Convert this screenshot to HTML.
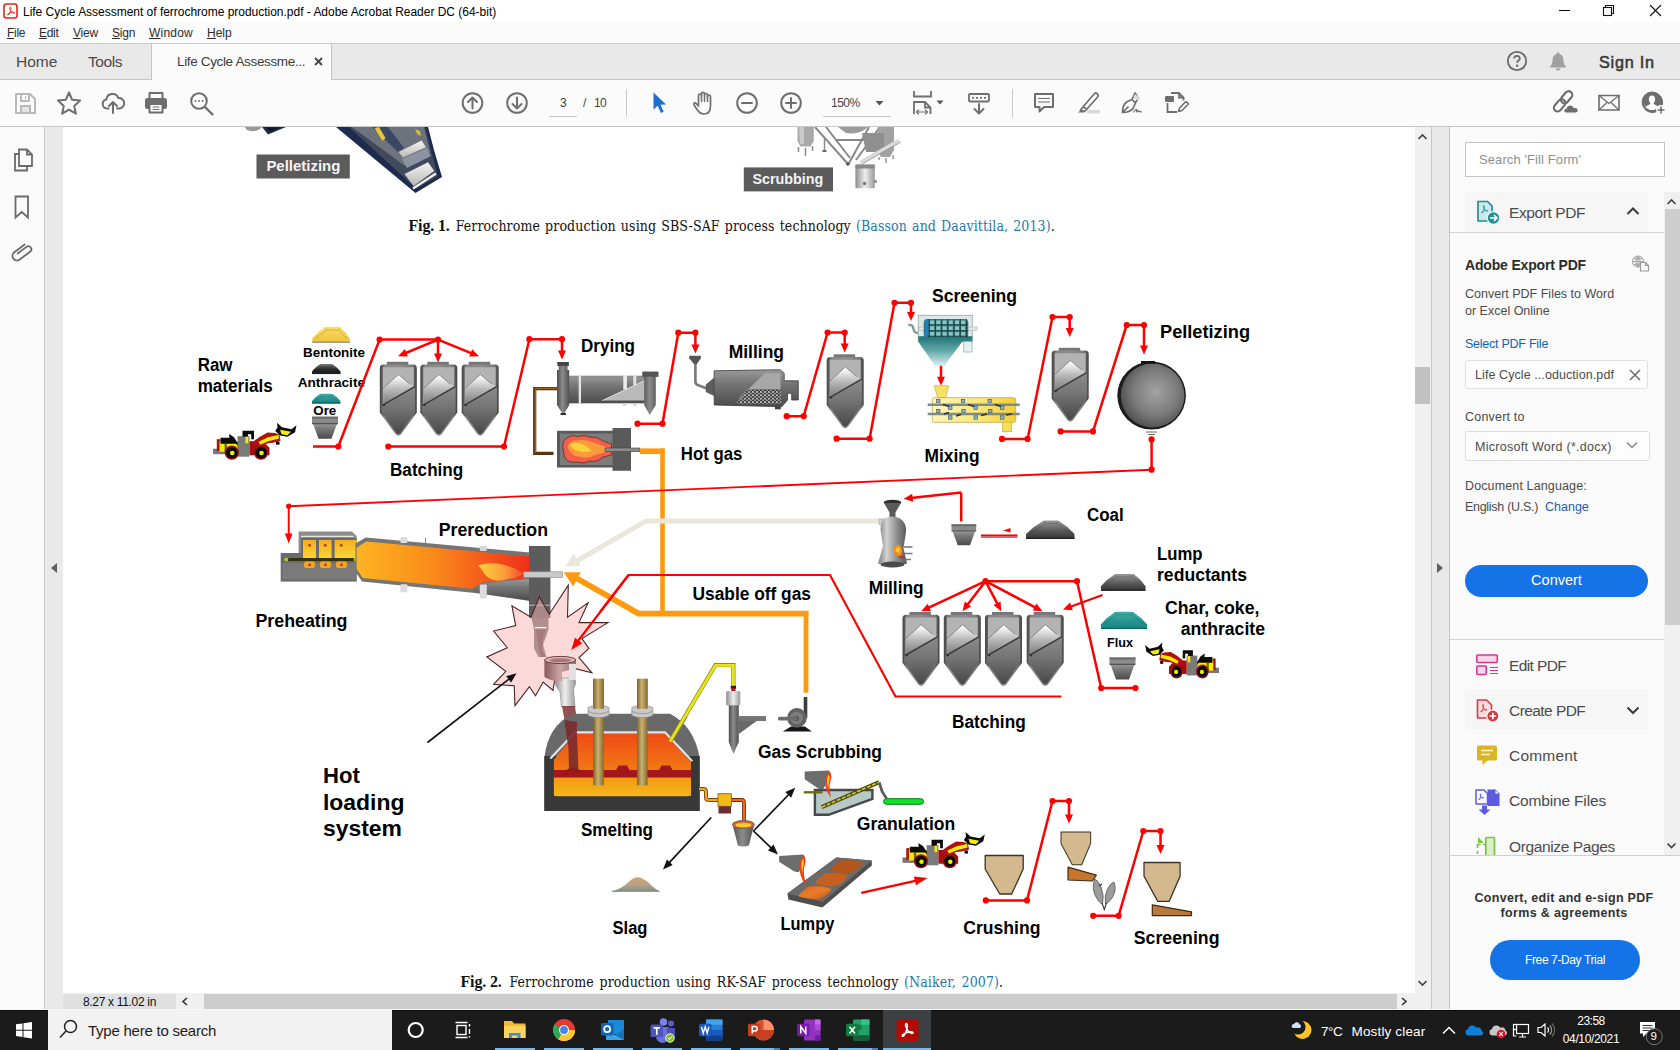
<!DOCTYPE html>
<html lang="en">
<head>
<meta charset="utf-8">
<title>Life Cycle Assessment of ferrochrome production.pdf - Adobe Acrobat Reader DC (64-bit)</title>
<style>
*{box-sizing:border-box;margin:0;padding:0}
html,body{width:1680px;height:1050px;overflow:hidden;background:#fff}
body{position:relative;font-family:"Liberation Sans",sans-serif;color:#000}
.abs{position:absolute}
.t{position:absolute;white-space:nowrap;line-height:1}
/* window chrome */
#titlebar{left:0;top:0;width:1680px;height:22px;background:#fff}
#menubar{left:0;top:22px;width:1680px;height:21px;background:#fbfbfb}
#tabbar{left:0;top:43px;width:1680px;height:37px;background:#e9e9e9;border-top:1px solid #c9c9c9;border-bottom:1px solid #c4c4c4}
#tabactive{left:151px;top:44px;width:181px;height:36px;background:#fbfbfb;border-left:1px solid #c4c4c4;border-right:1px solid #c4c4c4}
#toolbar{left:0;top:80px;width:1680px;height:47px;background:#fbfbfb;border-bottom:1px solid #c6c6c6}
/* panes */
#leftpane{left:0;top:127px;width:45px;height:883px;background:#fafafa;border-right:1px solid #c6c6c6}
#leftsplit{left:45px;top:127px;width:18px;height:883px;background:#e9e9e9}
#page{left:63px;top:127px;width:1352px;height:866px;background:#fff}
#vscroll{left:1415px;top:127px;width:16px;height:866px;background:#f0f0f0}
#rightsplit{left:1431px;top:127px;width:19px;height:883px;background:#e9e9e9;border-left:1px solid #c6c6c6;border-right:1px solid #c6c6c6}
#rightpane{left:1450px;top:127px;width:230px;height:883px;background:#fafafa}
#hscroll{left:63px;top:993px;width:1368px;height:17px;background:#f0f0f0}
#taskbar{left:0;top:1010px;width:1680px;height:40px;background:#1b1b1b;border-top:1px solid #0c0c0c}
</style>
</head>
<body>
<div class="abs" id="titlebar"></div>
<div class="abs" id="menubar"></div>
<div class="abs" id="tabbar"></div>
<div class="abs" id="tabactive"></div>
<div class="abs" id="toolbar"></div>
<div class="abs" id="leftpane"></div>
<div class="abs" id="leftsplit"></div>
<div class="abs" id="page"></div>
<div class="abs" id="vscroll"></div>
<div class="abs" id="rightsplit"></div>
<div class="abs" id="rightpane"></div>
<div class="abs" id="hscroll"></div>
<div class="abs" id="taskbar"></div>
<!--CHROME-->
<!-- ===== title bar ===== -->
<svg class="abs" style="left:3px;top:3px" width="15" height="16" viewBox="0 0 15 16"><rect x="1" y="1" width="13" height="14" rx="2.5" fill="#fff" stroke="#e1251b" stroke-width="1.6"/><path d="M7.4 4.2c-.9 0-.9 1.6.1 3.200 1 1.700 2.600 3 3.600 2.800.9-.2.300-1.200-.9-1.100-1.800.1-4.300 1-5.300 2-.8.800-.1 1.400.6.700 1-1 2-3.600 2.300-5.400.200-1.300.1-2.200-.4-2.200z" fill="none" stroke="#e1251b" stroke-width="1"/></svg>
<div class="t" style="left:23px;top:6px;font-size:12px;letter-spacing:-.02px;color:#000">Life Cycle Assessment of ferrochrome production.pdf - Adobe Acrobat Reader DC (64-bit)</div>
<svg class="abs" style="left:1550px;top:0" width="130" height="22" viewBox="0 0 130 22"><g stroke="#111" stroke-width="1.1" fill="none"><path d="M9 10.500h11"/><rect x="53.500" y="7.500" width="8" height="8"/><path d="M55.500 7.500v-2h8v8h-2"/><path d="M100 5l11 11M111 5l-11 11"/></g></svg>
<!-- ===== menu bar ===== -->
<div class="t" style="left:7px;top:27px;font-size:12px;color:#2b2b2b;letter-spacing:-.3px"><u>F</u>ile</div>
<div class="t" style="left:39px;top:27px;font-size:12px;color:#2b2b2b;letter-spacing:-.3px"><u>E</u>dit</div>
<div class="t" style="left:73px;top:27px;font-size:12px;color:#2b2b2b;letter-spacing:-.2px"><u>V</u>iew</div>
<div class="t" style="left:112px;top:27px;font-size:12px;color:#2b2b2b;letter-spacing:-.2px"><u>S</u>ign</div>
<div class="t" style="left:149px;top:27px;font-size:12px;color:#2b2b2b;letter-spacing:.2px"><u>W</u>indow</div>
<div class="t" style="left:207px;top:27px;font-size:12px;color:#2b2b2b;letter-spacing:0"><u>H</u>elp</div>
<!-- ===== tab bar ===== -->
<div class="t" style="left:16px;top:54px;font-size:15.5px;color:#4a4a4a">Home</div>
<div class="t" style="left:88px;top:54px;font-size:15.5px;color:#4a4a4a;letter-spacing:-.4px">Tools</div>
<div class="t" style="left:177px;top:55px;font-size:13.5px;color:#3c3c3c;letter-spacing:-.35px">Life Cycle Assessme...</div>
<svg class="abs" style="left:313px;top:56px" width="11" height="11" viewBox="0 0 11 11"><path d="M2 2l7 7M9 2l-7 7" stroke="#444" stroke-width="1.800" fill="none"/></svg>
<svg class="abs" style="left:1504px;top:48px" width="70" height="28" viewBox="0 0 70 28"><circle cx="13" cy="13" r="9.200" fill="none" stroke="#6a6a6a" stroke-width="1.800"/><path d="M10.200 10.600c0-3.600 5.600-3.600 5.600-.2 0 2.100-2.700 2.200-2.700 4.400" fill="none" stroke="#6a6a6a" stroke-width="1.800"/><circle cx="13.100" cy="17.800" r="1.200" fill="#6a6a6a"/><path d="M54 4.500c-1 0-1.500.7-1.500 1.500-3 1-4 3.500-4 6.500 0 3.500-1 4.500-2.500 6v1h16v-1c-1.500-1.500-2.500-2.500-2.500-6 0-3-1-5.500-4-6.500 0-.8-.5-1.500-1.500-1.500zM51.500 20.500c.3 1.300 1.200 2 2.500 2s2.200-.7 2.500-2z" fill="#a0a0a0"/></svg>
<div class="t" style="left:1599px;top:54px;font-size:16.2px;font-weight:400;-webkit-text-stroke:.55px #3a3a3a;color:#3a3a3a;letter-spacing:.75px">Sign In</div>
<!-- ===== toolbar icons ===== -->
<svg class="abs" style="left:0;top:80px" width="1680" height="46" viewBox="0 80 1680 46">
<g fill="none" stroke="#6e6e6e" stroke-width="2" stroke-linejoin="round" stroke-linecap="round">
<!-- save (disabled) -->
<g stroke="#b9b9b9"><path d="M16 94h14l5 5v14H16z"/><path d="M21 94v7h8v-7M21 113v-7h9v7" /><path d="M25.500 96.500v2.500" stroke-width="1"/><rect x="22" y="107" width="7" height="5" fill="#e4e4e4" stroke="none"/></g>
<!-- star -->
<path d="M69 92.500l3.200 7.300 7.900.800-5.900 5.300 1.700 7.800-6.900-4-6.900 4 1.700-7.800-5.900-5.300 7.900-.800z"/>
<!-- cloud upload -->
<path d="M108.500 108.500h-1.500a4.600 4.600 0 0 1-.6-9.100 6.200 6.200 0 0 1 12-1.300 5.200 5.200 0 0 1 1.100 10.400h-2.500M113 113v-10.500M109 106l4-4 4 4"/>
<!-- printer -->
<path d="M149.500 99v-6h13v6"/><rect x="146" y="99" width="20" height="9" rx="1.500" fill="#6e6e6e"/><rect x="149.500" y="104" width="13" height="8.500" fill="#fbfbfb"/><path d="M153 107h6M153 109.500h6" stroke-width="1"/>
<!-- find -->
<circle cx="199" cy="101" r="7.800"/><path d="M205 107l7.500 7.500" stroke-width="2.400"/><path d="M195.500 101h.1M199 101h.1M202.500 101h.1" stroke-width="1.800"/>
<!-- page up/down -->
<circle cx="472.500" cy="103" r="9.800"/><path d="M472.500 108.500v-10.500M468 102l4.500-4.500 4.500 4.500"/>
<circle cx="517" cy="103" r="9.800"/><path d="M517 97.500v10.500M512.500 104l4.500 4.500 4.500-4.500"/>
<!-- hand -->
<path d="M698.500 104v-8.500a1.500 1.500 0 0 1 3 0v-1.700a1.500 1.500 0 0 1 3 0v1.200a1.500 1.500 0 0 1 3 0v1.500a1.500 1.500 0 0 1 3 0v9.500c0 5-2.500 8-6.500 8-3.500 0-5-1.500-7-4.500l-3-4.800c-.8-1.500 1-2.500 2.200-1.200l2.300 2.500z" stroke-width="1.700"/><path d="M701.500 95.500v6M704.500 95v6.500M707.500 96.500v5" stroke-width="1.500"/>
<!-- zoom out / in -->
<circle cx="747" cy="103" r="9.800"/><path d="M742 103h10"/>
<circle cx="791" cy="103" r="9.800"/><path d="M786 103h10M791 98v10"/>
<!-- fit width -->
<path d="M914 91v5.500h17v-5.500M914 114v-12h11l5.500 5.500v6.500M925 102v5.500h5.500" stroke-width="1.800" stroke-linecap="butt" stroke-linejoin="miter"/><path d="M916.500 112h11M918.500 110l-2 2 2 2M925.500 110l2 2-2 2" stroke-width="1.200"/>
<!-- scroll mode -->
<rect x="969" y="94" width="20" height="7.500" rx="1" stroke-width="1.800"/><path d="M972 97.800h2M976 97.800h2M980 97.800h2M984 97.800h2" stroke-width="1.800" stroke-linecap="butt"/><path d="M979 104v9M974.500 109l4.500 4.500 4.500-4.500"/>
<!-- comment -->
<path d="M1035 94h18v13h-9l-4.500 4.500v-4.500h-4.500z"/><path d="M1038.500 98.500h11M1038.500 102h11" stroke-width="1.200"/>
<!-- highlighter -->
<path d="M1083 107l11.500-13.500c1.500-1.500 4.500 1 3.500 3l-11 12.500zM1083 107l-2.500 3 4 1.500 2.500-2.500" stroke-width="1.700"/><path d="M1078 112.500l3-2.500 3.500 1.500-1 1z" fill="#6e6e6e" stroke="none"/><rect x="1087" y="110" width="13" height="3.500" fill="#d9d9d9" stroke="none"/>
<!-- sign -->
<path d="M1122.500 112.500c0-4 1.500-8.500 4-10.500l5.500-2.500 3.500 3.500-2.500 5.500c-2 2.500-6.500 4-10.500 4zM1132 99.500l3-6.500 3.500 5-3 4.500M1123 112l5-5" stroke-width="1.700"/><path d="M1135 94l5 3.500-2 3-4.500-3z" fill="#d9d9d9" stroke="none"/><path d="M1133.500 112c1.500-2 2.500-3 3-2.500s-.5 2.500 0 2.500 1.500-2 2-1.500 0 1.500.5 1.500 1-1 1.500-.5.500.5 1 .5" stroke-width="1.100"/>
<!-- fill & sign doc -->
<path d="M1171 93h8l4.500 4.500v3M1179 93v4.500h4.500M1167.500 103v9h9.500" stroke-width="1.800" stroke-linejoin="miter" stroke-linecap="butt"/><rect x="1165" y="96" width="9" height="6" rx="1" fill="#6e6e6e" stroke="none"/><path d="M1178.500 111.500l1-3.500 6.500-6.500 2.500 2.500-6.500 6.500z" stroke-width="1.600"/>
<!-- share link -->
<rect x="-6.800" y="-3.700" width="13.600" height="7.400" rx="3.700" transform="translate(1559.600 105.400) rotate(-50)" stroke-width="2.200"/><rect x="-6.800" y="-3.700" width="13.600" height="7.400" rx="3.700" transform="translate(1566.600 97.300) rotate(-50)" stroke-width="2.200"/>
<!-- mail -->
<rect x="1599" y="95.500" width="20" height="14.500" stroke-width="1.600"/><path d="M1599 95.500l10 8 10-8M1599 110l7.500-7M1619 110l-7.500-7" stroke-width="1.300"/>
</g>
<path d="M1566.500 113.200c-1.700 0-2.800-1.100-2.800-2.500s1.100-2.500 2.500-2.500c.4-2 2-3.300 4-3.300 1.800 0 3.300 1 3.800 2.500 2.500-.5 4.300 1 4.300 3.100 0 1.600-1.100 2.700-2.800 2.700z" fill="#6e6e6e" stroke="#fbfbfb" stroke-width="1.200"/>
<!-- user add -->
<path d="M1652.500 92a10.500 10.500 0 1 0 5 19.800l-1.500-2.500c-.5-1-3.500-2-4-3v-1.500c1-1 1.500-2.300 1.500-4 0-2.500-1-4-3-4s-3 1.500-3 4c0 1.700.5 3 1.500 4v1.500c-.5 1-3.500 2-4.500 3.200a8 8 0 1 1 15.500-3l2.500-.5a10.500 10.500 0 0 0-10-14z" fill="#6e6e6e"/><circle cx="1652" cy="102" r="9.400" fill="none" stroke="#6e6e6e" stroke-width="2"/><circle cx="1652" cy="102" r="8.200" fill="#6e6e6e"/><path d="M1652 95.500c-2 0-3.200 1.600-3.200 3.800 0 1.700.6 3 1.500 3.800v1c-1 .8-3.500 1.500-4.800 2.800a8.200 8.200 0 0 0 13 0c-1.300-1.300-3.800-2-4.800-2.800v-1c.9-.8 1.500-2.100 1.500-3.800 0-2.200-1.200-3.800-3.200-3.800z" fill="#fbfbfb"/><circle cx="1661" cy="110" r="5" fill="#fbfbfb"/><path d="M1661 106.500v7M1657.500 110h7" stroke="#6e6e6e" stroke-width="1.600"/>
<!-- pointer (blue) -->
<path d="M653.500 92.500v17l4.200-3.800 3.200 7.300 2.800-1.300-3.200-7 5.500-.3z" fill="#1b6fd0"/>
<!-- dividers and underlines -->
<path d="M626.500 89v28M1012.500 89v28" stroke="#c9c9c9" stroke-width="1"/>
<path d="M549 116.500h28M823 116.500h68" stroke="#c3c3c3" stroke-width="1"/>
<path d="M875.500 101h8l-4 4.500z" fill="#555"/><path d="M936.500 100.500h7l-3.500 4z" fill="#555"/>
</svg>
<div class="t" style="left:560px;top:97px;font-size:12px;color:#444">3</div>
<div class="t" style="left:583px;top:97px;font-size:12px;color:#444">/</div>
<div class="t" style="left:594px;top:97px;font-size:12px;color:#444;letter-spacing:-.6px">10</div>
<div class="t" style="left:831px;top:97px;font-size:12px;color:#444;letter-spacing:-.5px">150%</div>
<!-- ===== left pane icons ===== -->
<svg class="abs" style="left:0;top:127px" width="44" height="150" viewBox="0 127 44 150"><g fill="none" stroke="#6a6a6a" stroke-width="1.800" stroke-linejoin="miter">
<path d="M19 149.500h8l5 5v11.500h-13zM27 149.500v5h5"/><path d="M19 154h-4v16.500h12v-4.500"/>
<path d="M15.500 196.500h12.500v21l-6.300-5.500-6.200 5.500z"/>
<path d="M7 -4.500H-6a4.500 4.500 0 0 0 0 9H7a3 3 0 0 0 0-6H-4" stroke-linecap="round" stroke-linejoin="round" transform="translate(21.800 252.300) rotate(-37)"/>
</g></svg>
<!-- pane collapse arrows -->
<svg class="abs" style="left:48px;top:560px" width="12" height="16" viewBox="0 0 12 16"><path d="M9 3v10l-6-5z" fill="#606060"/></svg>
<svg class="abs" style="left:1434px;top:560px" width="12" height="16" viewBox="0 0 12 16"><path d="M3 3v10l6-5z" fill="#606060"/></svg>
<!--CHROME-END-->
<!--RIGHTPANEL-->
<style>
.rp{color:#4b4b4b;font-size:12.5px}
.tool{color:#4b4b4b;font-size:15.5px}
</style>
<div class="abs" style="left:1465px;top:142px;width:200px;height:35px;background:#fff;border:1px solid #c4c4c4"></div>
<div class="t" style="left:1479px;top:153px;font-size:13px;color:#8e8e8e;letter-spacing:.1px">Search 'Fill Form'</div>
<div class="abs" style="left:1465px;top:192px;width:183px;height:40px;background:#f6f6f6"></div>
<div class="abs" style="left:1450px;top:232px;width:214px;height:1px;background:#d5d5d5"></div>
<svg class="abs" style="left:1474px;top:198px" width="30" height="30" viewBox="0 0 30 30"><path d="M4 3.500h9.500l4.500 4.500v10.500l-4 4.500h-10z" fill="#cfe9ea" stroke="#1a9296" stroke-width="1.700" stroke-linejoin="round"/><path d="M9.800 7.500c-.7 0-.6 1.300.1 2.700.8 1.600 2.500 3.200 3.500 3 .9-.2.200-1-.9-.9-1.700.2-3.700.9-4.700 1.900-.7.700 0 1.200.5.600.9-1 1.700-3.300 2-4.900.2-1.300 0-2.400-.5-2.400z" fill="none" stroke="#1a9296" stroke-width=".9"/><circle cx="19.500" cy="20" r="6.300" fill="#1a9296" stroke="#f4f4f4" stroke-width="1.200"/><path d="M16 20h6.500M20 17l3 3-3 3" fill="none" stroke="#fff" stroke-width="1.600"/></svg>
<div class="t tool" style="left:1509px;top:204.500px;letter-spacing:-.4px">Export PDF</div>
<svg class="abs" style="left:1625px;top:205px" width="16" height="12" viewBox="0 0 16 12"><path d="M2.500 9l5.500-5.500 5.500 5.500" fill="none" stroke="#3a3a3a" stroke-width="2"/></svg>
<div class="t" style="left:1465px;top:258px;font-size:14px;font-weight:700;color:#2c2c2c;letter-spacing:-.17px">Adobe Export PDF</div>
<svg class="abs" style="left:1631px;top:254px" width="19" height="18" viewBox="0 0 19 18"><g fill="none" stroke="#a9a9a9" stroke-width="1.100"><circle cx="7" cy="7.500" r="5.500"/><path d="M1.500 7.500h11M7 2v11M3 4.200c2.500 1.200 5.500 1.200 8 0M3 10.800c2.500-1.200 5.500-1.200 8 0M7 2c-3 3-3 8 0 11M7 2c3 3 3 8 0 11"/><path d="M9.500 8.500h5l3 3v5.500h-8z" fill="#fafafa" stroke="#999" stroke-width="1.200"/><path d="M14.500 8.500v3h3" stroke="#999"/></g></svg>
<div class="t rp" style="left:1465px;top:287.500px">Convert PDF Files to Word</div>
<div class="t rp" style="left:1465px;top:304.500px">or Excel Online</div>
<div class="t rp" style="left:1465px;top:337.500px;color:#1660b8;letter-spacing:-.25px">Select PDF File</div>
<div class="abs" style="left:1465px;top:360px;width:183px;height:29px;background:#fdfdfd;border:1px solid #e0e0e0;border-radius:3px"></div>
<div class="t rp" style="left:1475px;top:368.500px;letter-spacing:.08px">Life Cycle ...oduction.pdf</div>
<svg class="abs" style="left:1628px;top:368px" width="14" height="14" viewBox="0 0 14 14"><path d="M2 2l10 10M12 2l-10 10" stroke="#707070" stroke-width="1.600" fill="none"/></svg>
<div class="t rp" style="left:1465px;top:411px;letter-spacing:.2px">Convert to</div>
<div class="abs" style="left:1465px;top:431px;width:185px;height:30px;background:#fdfdfd;border:1px solid #dcdcdc;border-radius:3px"></div>
<div class="t rp" style="left:1475px;top:441px;letter-spacing:.28px">Microsoft Word (*.docx)</div>
<svg class="abs" style="left:1625px;top:440px" width="14" height="10" viewBox="0 0 14 10"><path d="M2 2.500l5 5 5-5" fill="none" stroke="#8a8a8a" stroke-width="1.500"/></svg>
<div class="t rp" style="left:1465px;top:480px;letter-spacing:.13px">Document Language:</div>
<div class="t rp" style="left:1465px;top:500.500px;letter-spacing:-.29px">English (U.S.)</div>
<div class="t rp" style="left:1545px;top:500.500px;color:#1660b8">Change</div>
<div class="abs" style="left:1465px;top:565px;width:183px;height:32px;background:#1473e6;border-radius:16px"></div>
<div class="t" style="left:1465px;top:573px;width:183px;text-align:center;font-size:14.500px;color:#fff">Convert</div>
<div class="abs" style="left:1450px;top:639px;width:214px;height:1px;background:#d5d5d5"></div>
<!-- tools list -->
<svg class="abs" style="left:1472px;top:650px" width="30" height="28" viewBox="0 0 30 28"><g fill="#f6d6e7" stroke="#d83790" stroke-width="1.600"><rect x="4.800" y="5" width="20.500" height="7.500" rx="1"/><rect x="4.800" y="16" width="9.500" height="8.500" rx="1"/></g><path d="M18 17.500h8M18 20.500h8M18 23.500h8" stroke="#d83790" stroke-width="1.100"/></svg>
<div class="t tool" style="left:1509px;top:657.500px;letter-spacing:-.6px">Edit PDF</div>
<div class="abs" style="left:1465px;top:690px;width:183px;height:40px;background:#f6f6f6"></div>
<svg class="abs" style="left:1472px;top:695px" width="30" height="30" viewBox="0 0 30 30"><path d="M5.500 5h9l5 5v13h-14z" fill="#f8dcde" stroke="#d7373f" stroke-width="1.600" stroke-linejoin="round"/><path d="M11 9.500c-.7 0-.6 1.300.1 2.700.8 1.600 2.500 3.200 3.500 3 .9-.2.200-1-.9-.9-1.700.2-3.700.9-4.700 1.900-.7.700 0 1.200.5.600.9-1 1.700-3.300 2-4.900.2-1.300 0-2.400-.5-2.400z" fill="none" stroke="#d7373f" stroke-width=".9"/><circle cx="20.800" cy="21" r="6" fill="#d7373f" stroke="#f5f5f5" stroke-width="1.200"/><path d="M17.500 21h6.600M20.800 17.700v6.600" stroke="#fff" stroke-width="1.700"/></svg>
<div class="t tool" style="left:1509px;top:702.500px;letter-spacing:-.56px">Create PDF</div>
<svg class="abs" style="left:1625px;top:704px" width="16" height="12" viewBox="0 0 16 12"><path d="M2.500 3.500l5.500 5.500 5.500-5.500" fill="none" stroke="#3a3a3a" stroke-width="2"/></svg>
<svg class="abs" style="left:1472px;top:741px" width="30" height="30" viewBox="0 0 30 30"><path d="M6.500 4.500h17a1.500 1.500 0 0 1 1.500 1.500v12a1.500 1.500 0 0 1-1.500 1.500h-8l-5 4.500v-4.500h-4a1.500 1.500 0 0 1-1.500-1.500v-12a1.500 1.500 0 0 1 1.500-1.500z" fill="#d9b526"/><path d="M9 9.500h12M9 13.500h9" stroke="#fdf6d8" stroke-width="1.600"/></svg>
<div class="t tool" style="left:1509px;top:747.500px;letter-spacing:.2px">Comment</div>
<svg class="abs" style="left:1472px;top:786px" width="30" height="30" viewBox="0 0 30 30"><path d="M4 4h8l3.500 3.500v10.500h-11.500z" fill="#fafafa" stroke="#5c5ce0" stroke-width="1.500" stroke-linejoin="round"/><path d="M8.500 7.800c-.5 0-.5 1 .1 2.100.6 1.200 1.900 2.400 2.700 2.300.7-.1.200-.8-.7-.7-1.300.1-2.900.7-3.600 1.500-.5.500 0 .9.400.5.700-.8 1.300-2.600 1.500-3.800.2-1 0-1.900-.4-1.900z" fill="none" stroke="#5c5ce0" stroke-width=".9"/><path d="M15.500 3.500h7.500l4.500 4.500v12h-12z" fill="#5c5ce0"/><path d="M23 3.500v4.500h4.500z" fill="#fafafa" stroke="#5c5ce0" stroke-width=".8"/><path d="M10 19.500h5v4h3.500l-6 5.500-6-5.500h3.500z" fill="#5c5ce0"/></svg>
<div class="t tool" style="left:1509px;top:793px;letter-spacing:-.16px">Combine Files</div>
<div class="abs" style="left:1450px;top:830px;width:214px;height:25px;overflow:hidden">
<svg class="abs" style="left:22px;top:2px" width="30" height="30" viewBox="0 0 30 30"><rect x="13.800" y="5.500" width="8.700" height="22" rx="1" fill="#d8efc8" stroke="#7cc33f" stroke-width="1.700"/><path d="M5.500 22v-3M5.500 16v-3.500h3M11 12.500h2.500" stroke="#7cc33f" stroke-width="1.600" fill="none"/><path d="M6 5v6h6z" fill="#7cc33f"/></svg>
<div class="t tool" style="left:59px;top:9px;letter-spacing:-.37px">Organize Pages</div>
</div>
<!-- panel scrollbar -->
<div class="abs" style="left:1664px;top:192px;width:16px;height:663px;background:#f0f0f0"></div>
<div class="abs" style="left:1665px;top:209px;width:15px;height:416px;background:#cdcdcd"></div>
<svg class="abs" style="left:1664px;top:192px" width="16" height="663" viewBox="0 0 16 663"><path d="M3.500 12l4-4 4 4M3.500 651.500l4 4 4-4" fill="none" stroke="#404040" stroke-width="1.600"/></svg>
<div class="abs" style="left:1450px;top:855px;width:230px;height:1px;background:#d0d0d0"></div>
<div class="t" style="left:1450px;top:892px;width:228px;text-align:center;font-size:12.500px;font-weight:700;color:#323232;letter-spacing:.29px">Convert, edit and e-sign PDF</div>
<div class="t" style="left:1450px;top:906.500px;width:228px;text-align:center;font-size:12.500px;font-weight:700;color:#323232;letter-spacing:.34px">forms &amp; agreements</div>
<div class="abs" style="left:1490px;top:940px;width:150px;height:40px;background:#1473e6;border-radius:20px"></div>
<div class="t" style="left:1490px;top:953.500px;width:150px;text-align:center;font-size:12px;color:#fff;letter-spacing:-.38px">Free 7-Day Trial</div>
<!--RIGHTPANEL-END-->
<!--DIAGRAM-->
<svg class="abs" id="diagram" style="left:63px;top:127px" width="1352" height="867" viewBox="63 127 1352 867" font-family="'Liberation Sans',sans-serif" font-weight="700">
<defs>
<linearGradient id="gSilo" x1="0" x2="1" y1="0" y2="0"><stop offset="0" stop-color="#474747"/><stop offset=".07" stop-color="#5e5e5e"/><stop offset=".12" stop-color="#858585"/><stop offset=".5" stop-color="#8e8e8e"/><stop offset=".88" stop-color="#7a7a7a"/><stop offset=".94" stop-color="#5a5a5a"/><stop offset="1" stop-color="#444"/></linearGradient>
<linearGradient id="gSiloLow" x1="0" x2="0" y1="0" y2="1"><stop offset="0" stop-color="#8d8d8d"/><stop offset=".45" stop-color="#747474"/><stop offset="1" stop-color="#474747"/></linearGradient>
<linearGradient id="gPeak" x1="0" x2="0" y1="0" y2="1"><stop offset="0" stop-color="#fff"/><stop offset=".12" stop-color="#f4f4f4"/><stop offset=".5" stop-color="#b9b9b9"/><stop offset="1" stop-color="#7e7e7e"/></linearGradient>
<linearGradient id="gGreyV" x1="0" x2="0" y1="0" y2="1"><stop offset="0" stop-color="#9a9a9a"/><stop offset=".35" stop-color="#777"/><stop offset="1" stop-color="#4c4c4c"/></linearGradient>
<linearGradient id="gGreyH" x1="0" x2="1" y1="0" y2="0"><stop offset="0" stop-color="#4e4e4e"/><stop offset=".45" stop-color="#8c8c8c"/><stop offset="1" stop-color="#505050"/></linearGradient>
<linearGradient id="gPileY" x1="0" x2="0" y1="0" y2="1"><stop offset="0" stop-color="#fbdd63"/><stop offset="1" stop-color="#efc13b"/></linearGradient>
<linearGradient id="gPileK" x1="0" x2="0" y1="0" y2="1"><stop offset="0" stop-color="#7a7a7a"/><stop offset=".55" stop-color="#2a2a2a"/><stop offset="1" stop-color="#111"/></linearGradient>
<linearGradient id="gPileT" x1="0" x2="0" y1="0" y2="1"><stop offset="0" stop-color="#3fb0aa"/><stop offset="1" stop-color="#13807c"/></linearGradient>
<linearGradient id="gPileG" x1="0" x2="0" y1="0" y2="1"><stop offset="0" stop-color="#9a9a9a"/><stop offset=".6" stop-color="#555"/><stop offset="1" stop-color="#333"/></linearGradient>
<linearGradient id="gKiln" x1="0" x2="1" y1="0" y2="0"><stop offset="0" stop-color="#fdb421"/><stop offset=".45" stop-color="#f98a1a"/><stop offset=".8" stop-color="#f5501a"/><stop offset="1" stop-color="#ef2f1a"/></linearGradient>
<linearGradient id="gFlame" x1="0" x2="1" y1="0" y2="0"><stop offset="0" stop-color="#fdd23a"/><stop offset=".6" stop-color="#fb9a3a"/><stop offset="1" stop-color="#f7603a" stop-opacity=".6"/></linearGradient>
<linearGradient id="gCell" x1="0" x2="0" y1="0" y2="1"><stop offset="0" stop-color="#f4b021"/><stop offset="1" stop-color="#fcd432"/></linearGradient>
<linearGradient id="gFurn" x1="0" x2="0" y1="0" y2="1"><stop offset="0" stop-color="#ef4a14"/><stop offset="1" stop-color="#f39a16"/></linearGradient>
<linearGradient id="gBath" x1="0" x2="0" y1="0" y2="1"><stop offset="0" stop-color="#f19812"/><stop offset="1" stop-color="#f8b81c"/></linearGradient>
<linearGradient id="gElec" x1="0" x2="1" y1="0" y2="0"><stop offset="0" stop-color="#7d6428"/><stop offset=".45" stop-color="#c9b272"/><stop offset="1" stop-color="#86692c"/></linearGradient>
<linearGradient id="gTeal" x1="0" x2="0" y1="0" y2="1"><stop offset="0" stop-color="#1f7377"/><stop offset=".5" stop-color="#63aaac"/><stop offset="1" stop-color="#dcefef"/></linearGradient>
<linearGradient id="gMix" x1="0" x2="1" y1="0" y2="0"><stop offset="0" stop-color="#fff6bc"/><stop offset=".6" stop-color="#fbe572"/><stop offset="1" stop-color="#f5d033"/></linearGradient>
<linearGradient id="gCup" x1="0" x2="1" y1="0" y2="0"><stop offset="0" stop-color="#8a5a5c"/><stop offset=".5" stop-color="#cba5a6"/><stop offset="1" stop-color="#996c6e"/></linearGradient>
<linearGradient id="gPipeL" x1="0" x2="1" y1="0" y2="0"><stop offset="0" stop-color="#8c8c8c"/><stop offset=".5" stop-color="#eee"/><stop offset="1" stop-color="#999"/></linearGradient>
<linearGradient id="gCoalMill" x1="0" x2="1" y1="0" y2="0"><stop offset="0" stop-color="#7c7c7c"/><stop offset=".3" stop-color="#d2d2d2"/><stop offset=".65" stop-color="#8e8e8e"/><stop offset="1" stop-color="#555"/></linearGradient>
<radialGradient id="gBall" cx=".55" cy=".45" r=".6"><stop offset="0" stop-color="#a3a3a3"/><stop offset=".6" stop-color="#7a7a7a"/><stop offset="1" stop-color="#4a4a4a"/></radialGradient>
<linearGradient id="gSlag" x1="0" x2="0" y1="0" y2="1"><stop offset="0" stop-color="#d0a47a"/><stop offset=".55" stop-color="#b8a088"/><stop offset="1" stop-color="#7f9484"/></linearGradient>
<linearGradient id="gMould" x1="0" x2="1" y1="0" y2="1"><stop offset="0" stop-color="#d8641e"/><stop offset=".5" stop-color="#ea7c26"/><stop offset="1" stop-color="#c9581c"/></linearGradient>
<linearGradient id="gTray" x1="0" x2="0" y1="0" y2="1"><stop offset="0" stop-color="#f4f4f0"/><stop offset="1" stop-color="#b9bab6"/></linearGradient>
<pattern id="pBalls" width="4" height="3.4" patternUnits="userSpaceOnUse"><rect width="4" height="3.4" fill="#3a3a3a"/><circle cx="1" cy="1" r=".9" fill="#e8e8e8"/><circle cx="3" cy="2.6" r=".8" fill="#cfcfcf"/></pattern>
<g id="silo">
 <rect x="7" y=".3" width="21.500" height="3.500" fill="#767676"/>
 <path d="M0 6.500Q0 3 3.500 3L33.500 3Q37 3 37 6.500L37 51L21.500 72.500Q18.500 76 15.500 72.500L0 51Z" fill="url(#gSilo)"/>
 <path d="M1.800 43.500L35.200 24.800L35.200 50.500L20.800 71.300Q18.500 74 16.200 71.300L1.800 50.500Z" fill="url(#gSiloLow)"/>
 <path d="M3 5.800L34 5.800L34 24.800L3 42.500Z" fill="#b3b3b3"/>
 <path d="M3.300 26.800L18.700 13L30 22.500L34 25L3.500 42.300Z" fill="url(#gPeak)"/>
 <path d="M3.300 26.800L18.700 13L30 22.500" stroke="#6a6a6a" stroke-width=".7" fill="none"/>
 <path d="M2.500 43.800L35 25.200" stroke="#3c3c3c" stroke-width="1.500" fill="none"/>
 <circle cx="4.200" cy="43.600" r="1.100" fill="#2e2e2e"/>
</g>
<g id="hopper">
 <path d="M0 0H26V6.500H0Z" fill="#8b8b8b"/><path d="M0 0H26V2H0Z" fill="#6a6a6a"/>
 <path d="M1 7L25 7L19.500 22L6.500 22Z" fill="url(#gGreyV)"/><path d="M0 6.200H26V7.600H0Z" fill="#555"/>
</g>
<g id="loader">
 <rect x="0" y="26.500" width="13" height="5.500" fill="#777"/>
 <rect x="3.800" y="17" width="3.500" height="12" fill="#b01010"/><rect x="6.500" y="19" width="24" height="10.500" fill="#f6ee00"/>
 <path d="M7.500 21.500V15.500H16.500L16 11.800L21 15L25 21.500Z" fill="#0a0a0a"/><path d="M22 20L29 19L31.500 28.500L27.500 27.500Z" fill="#0a0a0a"/><rect x="11.500" y="21.500" width="2.500" height="8" fill="#0a0a0a" fill-opacity=".55"/>
 <rect x="24.500" y="14" width="12" height="20.500" fill="#7a7a7a"/>
 <path d="M29.500 8.500H41V17H38.200V12H35V14.500H29.500Z" fill="#0a0a0a"/><rect x="32.500" y="14.500" width="2.800" height="6.500" fill="#f6ee00"/>
 <path d="M36.500 19H50L56.500 25.500V33H36.500Z" fill="#a90c0c"/>
 <path d="M40.800 19L47 14.500L54.500 10.200L62 10.800L66.500 12.500L67.500 18.700L60 20.500L55 21L45.600 24L40.800 23Z" fill="#b01010"/>
 <path d="M45.600 19.500L55 15L65.500 12.800L66 16.200L56 18.800L47 22.500Z" fill="#f6ee00"/>
 <path d="M64 .5L69 5L78.500 7L83.500 3L82 10L74.500 14.500L67 13.200L62.300 8.800L64.500 5Z" fill="#0a0a0a"/><path d="M67 7.500L78 9.500L74.500 13L68.500 12Z" fill="#f6ee00"/>
 <rect x="63" y="19.500" width="3.500" height="3" fill="#0a0a0a"/>
 <circle cx="18.800" cy="30.400" r="7.200" fill="#a50d0d"/><circle cx="18.800" cy="30.400" r="5.700" fill="#0a0a0a"/><circle cx="19.300" cy="30.800" r="2.300" fill="#f6ee00"/>
 <circle cx="48" cy="30.400" r="7.200" fill="#a50d0d"/><circle cx="48" cy="30.400" r="5.700" fill="#0a0a0a"/><circle cx="48.500" cy="30.800" r="2.300" fill="#f6ee00"/>
</g>
<g id="thopper"><path d="M0 0H38V13.500L26.500 38.500H14.500L0 13.500Z" fill="#d3b98d" stroke="#3a3326" stroke-width="1.300" stroke-linejoin="round"/></g>
</defs>
<g>
<path d="M336 127H428L434 150L442 177L415.500 193L336 127Z" fill="#1d2c4e"/><path d="M349 127H425L431 150L437.500 176L416 188.500Z" fill="#414a5c"/>
<path d="M352 127H424L430 152L405 166Z" fill="#6d737d"/>
<path d="M372 127H388L404 148L398 152Z" fill="#3a4763"/>
<path d="M374.500 128L379 127L385.500 138L382.500 141Z" fill="#e5c53a"/><path d="M415 129L420 131L421 136L417 134Z" fill="#d9bb35"/>
<path d="M398.600 152L421.600 140.600L426 147.300L403 157.500Z" fill="url(#gTray)"/>
<path d="M402 159L427 148L431 156L407 168Z" fill="#8d93a2"/>
<path d="M404.500 174L428 162.200L434.300 171L413.500 186Z" fill="url(#gTray)"/>
<path d="M413 188.500L436 173.500" stroke="#f2f2f2" stroke-width="2.200"/>
<path d="M244.500 127H262Q256 133.500 247 130Z" fill="#9a9a9a"/><path d="M262 127H286L268 134.500Z" fill="#1d2c4e"/><path d="M266 127.500L280 127.500L270 131.500Z" fill="#101828"/>
</g>
<rect x="256.500" y="154.500" width="93.300" height="24" fill="#5b5b5b"/>
<text x="266.4" y="171" font-size="14.5" textLength="74" lengthAdjust="spacingAndGlyphs" fill="#f4f4f4">Pelletizing</text>
<g>
<path d="M797.500 127H813.800V141L810.500 146.500H800.500L797.500 141Z" fill="#a9a9a9"/><path d="M799 127H804V144H800Z" fill="#c9c9c9"/>
<path d="M798.500 147V152M805.500 148V156M812.500 146V151M824.500 139V151" stroke="#8a8a8a" stroke-width="1.500"/><rect x="822.500" y="150" width="4" height="2" fill="#666"/>
<path d="M815 127L848 164M826 127L850 158M869 127L848.500 164M880 127L856 160M835 140L870 140" stroke="#888" stroke-width="2" fill="none"/>
<path d="M838 127H868Q860 135 846 133Z" fill="#9c9c9c"/>
<circle cx="847.800" cy="164" r="1.800" fill="#555"/>
<path d="M877.700 127H894V150L890 157H881L877.700 150Z" fill="#a2a2a2"/><path d="M862 133H884V152H866Z" fill="#8f8f8f"/>
<path d="M899 140.500L862 161.500V170" stroke="#d9d9d9" stroke-width="3.600" fill="none"/><path d="M899 140.500L862 161.500V170" stroke="#9a9a9a" stroke-width="1" fill="none" transform="translate(1.800 1.500)"/>
<rect x="855.400" y="164.500" width="19.400" height="23.700" rx="1.500" fill="url(#gPipeL)"/><rect x="855.400" y="164.500" width="19.400" height="4" fill="#8a8a8a"/>
<circle cx="864.500" cy="183.500" r="1.700" fill="#777"/><circle cx="875.500" cy="181.500" r="1.500" fill="#888"/>
<path d="M879 157V160M886 158V163M893 155V159" stroke="#8a8a8a" stroke-width="1.300"/>
</g>
<rect x="743.800" y="167.400" width="89.200" height="24" fill="#5b5b5b"/>
<text x="752.4" y="184" font-size="14.5" textLength="71" lengthAdjust="spacingAndGlyphs" fill="#f4f4f4">Scrubbing</text>
<path d="M312.3 338.5Q317.6 331.8 324.8 327.3Q325.8 327 326.8 327L338.3 327Q339.3 327 340.3 327.3Q345.9 331.8 349.8 338.5L349.8 342.7L312.3 342.7Z" fill="url(#gPileY)"/>
<path d="M312.3 342.1H349.8" stroke="#8d8d8d" stroke-width="1.400"/>
<path d="M324.8 327.5L326.8 330L338.3 330L340.3 327.5M326.8 330L315.3 338.5M338.3 330L346.8 338.5" stroke="#000" stroke-opacity=".2" stroke-width=".8" fill="none"/>
<path d="M312 371.3Q315.2 367.1 320 364.3Q321 364 322 364L330.5 364Q331.5 364 332.5 364.3Q337.2 367.1 340.4 371.3L340.4 374L312 374Z" fill="url(#gPileK)"/>
<path d="M312 373.4H340.4" stroke="#222" stroke-width="1.400"/>
<path d="M320 364.5L322 367L330.5 367L332.5 364.5M322 367L315 371.3M330.5 367L337.4 371.3" stroke="#000" stroke-opacity=".2" stroke-width=".8" fill="none"/>
<path d="M312 400.9Q315.2 396.7 320 394Q321 393.7 322 393.7L330.5 393.7Q331.5 393.7 332.5 394Q337.2 396.7 340.4 400.9L340.4 403.5L312 403.5Z" fill="url(#gPileT)"/>
<path d="M312 402.9H340.4" stroke="#0e6a66" stroke-width="1.400"/>
<path d="M320 394.2L322 396.7L330.5 396.7L332.5 394.2M322 396.7L315 400.9M330.5 396.7L337.4 400.9" stroke="#000" stroke-opacity=".2" stroke-width=".8" fill="none"/>
<use href="#hopper" x="312" y="416.700"/>
<use href="#loader" x="213" y="422.200"/>
<text x="197.7" y="371.3" font-size="17.5" textLength="34.8" lengthAdjust="spacingAndGlyphs" fill="#000">Raw</text>
<text x="197.7" y="392.3" font-size="17.5" textLength="75" lengthAdjust="spacingAndGlyphs" fill="#000">materials</text>
<text x="303" y="357.3" font-size="13.5" textLength="62" lengthAdjust="spacingAndGlyphs" fill="#000">Bentonite</text>
<text x="297.7" y="387" font-size="13.5" textLength="67.3" lengthAdjust="spacingAndGlyphs" fill="#000">Anthracite</text>
<text x="313.3" y="414.6" font-size="13.5" textLength="23" lengthAdjust="spacingAndGlyphs" fill="#000">Ore</text>
<path d="M313 446.5L338.3 446.5L379.6 339.6L438 339.6" stroke="#fe0000" stroke-width="2.5" fill="none" stroke-linejoin="round"/>
<circle cx="338.3" cy="446.5" r="3.1" fill="#fe0000"/>
<circle cx="379.6" cy="339.6" r="3.1" fill="#fe0000"/>
<circle cx="438" cy="339.6" r="3.1" fill="#fe0000"/>
<path d="M438 339.6L404.6 353.5" stroke="#fe0000" stroke-width="2.5" fill="none"/><path d="M398 356.3L404.8 349.1L407.8 356.5z" fill="#fe0000"/>
<path d="M438 339.6L438 355.3" stroke="#fe0000" stroke-width="2.5" fill="none"/><path d="M438 362.5L434 353.5L442 353.5z" fill="#fe0000"/>
<path d="M438 339.6L472.3 353.6" stroke="#fe0000" stroke-width="2.5" fill="none"/><path d="M479 356.3L469.2 356.6L472.2 349.2z" fill="#fe0000"/>
<use href="#silo" x="379.8" y="361.500"/>
<use href="#silo" x="420.3" y="361.500"/>
<use href="#silo" x="461.7" y="361.500"/>
<path d="M388.3 446.5L504 446.5L529.4 339.2L562 339.2" stroke="#fe0000" stroke-width="2.5" fill="none" stroke-linejoin="round"/>
<circle cx="388.3" cy="446.5" r="3.1" fill="#fe0000"/>
<circle cx="504" cy="446.5" r="3.1" fill="#fe0000"/>
<circle cx="529.4" cy="339.2" r="3.1" fill="#fe0000"/>
<circle cx="562" cy="339.2" r="3.1" fill="#fe0000"/>
<path d="M562 339.2L562 352.3" stroke="#fe0000" stroke-width="2.5" fill="none"/><path d="M562 359.5L558 350.5L566 350.5z" fill="#fe0000"/>
<text x="390" y="475.6" font-size="17.5" textLength="73.3" lengthAdjust="spacingAndGlyphs" fill="#000">Batching</text>
<text x="581" y="352" font-size="17.5" textLength="54" lengthAdjust="spacingAndGlyphs" fill="#000">Drying</text>
<g>
<rect x="569" y="375.800" width="75.500" height="27.500" fill="url(#gGreyV)"/><rect x="569" y="375.800" width="75.500" height="4.500" fill="#8f8f8f"/>
<path d="M602.500 400.500L644.200 380.800V400.500Z" fill="#b9b9b9"/><path d="M602.500 400.500L644.200 380.800" stroke="#e2e2e2" stroke-width="1"/>
<rect x="578.700" y="375" width="2.300" height="28.500" fill="#e6e6e6"/><rect x="623.300" y="375" width="3.600" height="14.500" fill="#ececec"/><rect x="633.300" y="375" width="3" height="10" fill="#e4e4e4"/>
<rect x="622.500" y="403" width="3.500" height="2.600" fill="#cfcfcf"/><rect x="633" y="403" width="3.500" height="2.600" fill="#cfcfcf"/>
<path d="M557.500 362H568.700V365.800H567.500V370H569.200V405L563.300 415L557 405V370H558.700V365.800H557.500Z" fill="url(#gGreyH)"/><rect x="557.500" y="362" width="11.200" height="3.800" fill="#444"/><rect x="560.500" y="413" width="5.500" height="2" fill="#333"/>
<path d="M642.500 371.700H658.300V376.700H655.800V405L649.700 415L644.200 405V376.700H642.500Z" fill="url(#gGreyH)"/><rect x="642.500" y="371.700" width="15.800" height="5" fill="#555"/>
</g>
<path d="M557 388.700H534.700V453.300H553.500" stroke="#5d3210" stroke-width="3.200" fill="none"/><path d="M557 388.300H535.300V453" stroke="#b9691f" stroke-width="1" fill="none"/>
<g><rect x="557" y="430.800" width="56" height="36.700" fill="#595959"/><rect x="560" y="433.500" width="53" height="31.500" fill="#7c7c7c"/>
<path d="M563 449Q561.500 440 568 437.500Q572 434 578 436.500Q584 434 590 437Q597 436 603 441L611.500 444V455L603 457Q598 462.500 590 461Q584 464.500 577 462Q568 463.500 564.500 457Z" fill="#f25f4b" stroke="#5a1d14" stroke-width=".7"/>
<path d="M567.500 446Q570 440 577 440.500Q586 438.500 596 443.500L606 447V452L597 454.500Q588 459 579 456.500Q570 456 567.500 446Z" fill="#fb9a3a"/><path d="M570 444.500Q575 441.500 582 444Q588 446.500 592 451Q583 453 577 450.500Q572 449 570 444.500Z" fill="#fdd23c"/>
<rect x="612.500" y="428" width="18.500" height="42.800" fill="#5a5a5a"/><rect x="605" y="448" width="35" height="3.700" fill="#8b8b8b" stroke="#444" stroke-width=".6"/></g>
<path d="M640 451.200H664.500" stroke="#fe9a10" stroke-width="5.600" fill="none"/><path d="M662.500 448.500V613" stroke="#fe9a10" stroke-width="4.600" fill="none"/>
<text x="680.8" y="460.4" font-size="17.5" textLength="61.5" lengthAdjust="spacingAndGlyphs" fill="#000">Hot gas</text>
<path d="M637.5 423.7L662.5 423.7L678.3 332.7L695.4 332.7" stroke="#fe0000" stroke-width="2.5" fill="none" stroke-linejoin="round"/>
<circle cx="637.5" cy="423.7" r="3.1" fill="#fe0000"/>
<circle cx="662.5" cy="423.7" r="3.1" fill="#fe0000"/>
<circle cx="678.3" cy="332.7" r="3.1" fill="#fe0000"/>
<circle cx="695.4" cy="332.7" r="3.1" fill="#fe0000"/>
<path d="M695.4 332.7L695.4 346.3" stroke="#fe0000" stroke-width="2.5" fill="none"/><path d="M695.4 353.5L691.4 344.5L699.4 344.5z" fill="#fe0000"/>
<text x="728.7" y="358" font-size="17.5" textLength="55.3" lengthAdjust="spacingAndGlyphs" fill="#000">Milling</text>
<g>
<path d="M689.200 355.800H700.800V358.300L696.700 364.200H694.200L689.200 358.300Z" fill="#555"/>
<path d="M695.400 364V381.500Q695.400 384.500 699 385.500L707 388.500" stroke="#777" stroke-width="2.600" fill="none"/>
<path d="M705.800 384.500L714.200 377.500V396L705.800 392Z" fill="#5e5e5e"/>
<path d="M714.200 370.800L780 369.700L784.200 373.300V380.800H798.300V400H791.700V393.300H787.500V400L781.700 406.700L714.200 405Z" fill="url(#gGreyV)" stroke="#3a3a3a" stroke-width=".8"/>
<path d="M737 400L765 373.300H780.500V389H752Z" fill="#a8a8a8"/>
<path d="M736 403.500L748 389.500H781V403.800Z" fill="url(#pBalls)"/>
<rect x="775" y="405.500" width="5.800" height="3.800" fill="#444"/>
</g>
<path d="M786.7 416.2L803.7 416.2L827.6 332.5L844.7 332.5" stroke="#fe0000" stroke-width="2.5" fill="none" stroke-linejoin="round"/>
<circle cx="786.7" cy="416.2" r="3.1" fill="#fe0000"/>
<circle cx="803.7" cy="416.2" r="3.1" fill="#fe0000"/>
<circle cx="827.6" cy="332.5" r="3.1" fill="#fe0000"/>
<circle cx="844.7" cy="332.5" r="3.1" fill="#fe0000"/>
<path d="M844.7 332.5L844.7 345.3" stroke="#fe0000" stroke-width="2.5" fill="none"/><path d="M844.7 352.5L840.7 343.5L848.7 343.5z" fill="#fe0000"/>
<use href="#silo" x="826.700" y="354"/>
<path d="M836.6 438.7L869.6 438.7L894.5 302.8L911 302.8" stroke="#fe0000" stroke-width="2.5" fill="none" stroke-linejoin="round"/>
<circle cx="836.6" cy="438.7" r="3.1" fill="#fe0000"/>
<circle cx="869.6" cy="438.7" r="3.1" fill="#fe0000"/>
<circle cx="894.5" cy="302.8" r="3.1" fill="#fe0000"/>
<circle cx="911" cy="302.8" r="3.1" fill="#fe0000"/>
<path d="M911 302.8L911 313.8" stroke="#fe0000" stroke-width="2.5" fill="none"/><path d="M911 321L907 312L915 312z" fill="#fe0000"/>
<text x="932" y="302" font-size="17.5" textLength="85" lengthAdjust="spacingAndGlyphs" fill="#000">Screening</text>
<g>
<path d="M908.300 325Q913 324 913.500 329Q914 333.500 919 333" stroke="#7e9a9a" stroke-width="2.400" fill="none"/>
<rect x="918.300" y="315.400" width="54" height="26" fill="#dde9e9" stroke="#a5b5b5" stroke-width="1"/>
<path d="M918.300 336.300H972.300V341.700H962.300L945.700 363.700V365.700H933.700V363.700L918.300 341.700Z" fill="url(#gTeal)"/>
<rect x="963.700" y="341.700" width="8.300" height="10.300" fill="#e6f1f1" stroke="#9ab5b5" stroke-width=".8"/>
<rect x="919" y="327" width="58" height="3.300" fill="#e4e4e4" stroke="#aaa" stroke-width=".5"/>
<rect x="923.700" y="319" width="44.600" height="18.700" rx="4" fill="#2f7d80"/>
<g fill="#8fc3c4"><rect x="930" y="320.5" width="4.200" height="4" /><rect x="930" y="326.3" width="4.200" height="4" /><rect x="930" y="332.1" width="4.200" height="4" /><rect x="936.2" y="320.5" width="4.200" height="4" /><rect x="936.2" y="326.3" width="4.200" height="4" /><rect x="936.2" y="332.1" width="4.200" height="4" /><rect x="942.4" y="320.5" width="4.200" height="4" /><rect x="942.4" y="326.3" width="4.200" height="4" /><rect x="942.4" y="332.1" width="4.200" height="4" /><rect x="948.6" y="320.5" width="4.200" height="4" /><rect x="948.6" y="326.3" width="4.200" height="4" /><rect x="948.6" y="332.1" width="4.200" height="4" /><rect x="954.8" y="320.5" width="4.200" height="4" /><rect x="954.8" y="326.3" width="4.200" height="4" /><rect x="954.8" y="332.1" width="4.200" height="4" /><rect x="961" y="320.5" width="4.200" height="4" /><rect x="961" y="326.3" width="4.200" height="4" /><rect x="961" y="332.1" width="4.200" height="4" /></g>
<path d="M924 324.800H968M924 330.800H968M924 336.200H968M929.3 319V337.500M935.5 319V337.500M941.7 319V337.500M947.9 319V337.500M954.1 319V337.500M960.3 319V337.500M966.5 319V337.500" stroke="#173c3e" stroke-width=".9" fill="none"/>
<rect x="924.600" y="319.500" width="3.700" height="17.700" rx="1.500" fill="#1f7fc2"/>
</g>
<path d="M941 365.7L941 378.5" stroke="#fe0000" stroke-width="2.5" fill="none"/><path d="M941 385.7L937 376.7L945 376.7z" fill="#fe0000"/>
<g>
<path d="M934.300 385.700H948.600L945.700 397.500H937.700Z" fill="#f8e169" stroke="#cdb545" stroke-width=".8"/>
<rect x="932.300" y="397.700" width="83.400" height="24.600" rx="2" fill="url(#gMix)" stroke="#c9b24a" stroke-width=".9"/>
<rect x="1002.700" y="422" width="9" height="9.700" fill="#f8de55" stroke="#c9b24a" stroke-width=".8"/>
<path d="M927.700 404.700H1019.700M927.700 414H1019.700" stroke="#7c8b8d" stroke-width="2.400"/>
<g fill="#8db2c9" stroke="#3c4c55" stroke-width=".6"><rect x="936.6" y="399.3" width="3.400" height="3.400"/><rect x="961.3" y="399.3" width="3.400" height="3.400"/><rect x="988" y="399.3" width="3.400" height="3.400"/><rect x="948.6" y="406" width="3.400" height="3.400"/><rect x="974" y="406" width="3.400" height="3.400"/><rect x="1000.6" y="406" width="3.400" height="3.400"/><rect x="936.6" y="409.3" width="3.400" height="3.400"/><rect x="961.8" y="409.3" width="3.400" height="3.400"/><rect x="988.6" y="409.3" width="3.400" height="3.400"/><rect x="948.6" y="415.8" width="3.400" height="3.400"/><rect x="974" y="415.8" width="3.400" height="3.400"/><rect x="1000.6" y="415.8" width="3.400" height="3.400"/></g>
<path d="M943 404.500l6 2M968 404.500l6 2M995 404.500l6 2M944 414l5 -1.500M956 416l5 -1.500M981 415.500l6 -1.500M1006 415l6 -1" stroke="#2b3436" stroke-width="1.600"/>
</g>
<text x="924.5" y="461.6" font-size="17.5" textLength="55" lengthAdjust="spacingAndGlyphs" fill="#000">Mixing</text>
<path d="M1002 438.9L1027.6 438.9L1052.5 317L1069.7 317" stroke="#fe0000" stroke-width="2.5" fill="none" stroke-linejoin="round"/>
<circle cx="1002" cy="438.9" r="3.1" fill="#fe0000"/>
<circle cx="1027.6" cy="438.9" r="3.1" fill="#fe0000"/>
<circle cx="1052.5" cy="317" r="3.1" fill="#fe0000"/>
<circle cx="1069.7" cy="317" r="3.1" fill="#fe0000"/>
<path d="M1069.7 317L1069.7 329.8" stroke="#fe0000" stroke-width="2.5" fill="none"/><path d="M1069.7 337L1065.7 328L1073.7 328z" fill="#fe0000"/>
<use href="#silo" x="1051.700" y="347.500"/>
<path d="M1060.6 431.4L1093 431.4L1126.7 325L1144 325" stroke="#fe0000" stroke-width="2.5" fill="none" stroke-linejoin="round"/>
<circle cx="1060.6" cy="431.4" r="3.1" fill="#fe0000"/>
<circle cx="1093" cy="431.4" r="3.1" fill="#fe0000"/>
<circle cx="1126.7" cy="325" r="3.1" fill="#fe0000"/>
<circle cx="1144" cy="325" r="3.1" fill="#fe0000"/>
<path d="M1144 325L1144 347.3" stroke="#fe0000" stroke-width="2.5" fill="none"/><path d="M1144 354.5L1140 345.5L1148 345.5z" fill="#fe0000"/>
<text x="1160" y="337.6" font-size="17.5" textLength="90" lengthAdjust="spacingAndGlyphs" fill="#000">Pelletizing</text>
<ellipse cx="1151.600" cy="395.500" rx="34.300" ry="34" fill="#1c1c1c"/><ellipse cx="1152.600" cy="395.500" rx="31.800" ry="32" fill="url(#gBall)"/><rect x="1141" y="361" width="14" height="2.500" fill="#111"/><path d="M1146 432H1157M1148.500 434.500H1155" stroke="#666" stroke-width="1"/>
<path d="M1151.6 439.4L1151.6 469.7" stroke="#fe0000" stroke-width="2.5" fill="none" stroke-linejoin="round"/>
<circle cx="1151.6" cy="439.4" r="3.1" fill="#fe0000"/>
<circle cx="1151.6" cy="469.7" r="3.1" fill="#fe0000"/>
<path d="M1151.600 469.700L288.700 506.200" stroke="#fe0000" stroke-width="1.900" fill="none"/><circle cx="288.700" cy="506.200" r="2.600" fill="#fe0000"/>
<path d="M288.7 506.2L288.7 535.5" stroke="#fe0000" stroke-width="1.9" fill="none"/><path d="M288.7 543.5L284.9 533.5L292.5 533.5z" fill="#fe0000"/>
<path d="M888 521H646L576 561.500" stroke="#e9e7dc" stroke-width="5" fill="none"/>
<path d="M565 566.5L574 553.7L580.6 566z" fill="#e9e7dc"/>
<path d="M577 578.500L638.500 613.600H808.400" stroke="#fe9a10" stroke-width="5.800" fill="none" stroke-linejoin="miter"/><path d="M806 611V692.700" stroke="#fe9a10" stroke-width="4.800" fill="none"/>
<path d="M563.7 572.3L580.7 572.3L573.2 586.4z" fill="#fe9a10"/>
<path d="M1061.500 696.500H895.500L830 575H628.500L600 612" stroke="#fe0000" stroke-width="2.200" fill="none"/>
<g>
<rect x="280.700" y="553" width="76" height="28.600" fill="#6b6b6b"/><rect x="282.500" y="563" width="74" height="16.500" fill="#7a7a7a"/>
<path d="M298.600 531.600H352L356.600 536V553H298.600Z" fill="#8c8c8c"/><path d="M301 536.300H353.500" stroke="#e8e8e8" stroke-width="1.300"/><rect x="301" y="538" width="55.600" height="15" fill="#6a6a6a"/>
<rect x="303" y="540" width="13" height="18.400" fill="url(#gCell)"/>
<rect x="319" y="540" width="12.6" height="18.400" fill="url(#gCell)"/>
<rect x="334.6" y="540" width="22" height="18.400" fill="url(#gCell)"/>
<g fill="#b5481a"><circle cx="309.6" cy="545.200" r="1.500"/><circle cx="325.2" cy="545.200" r="1.500"/><circle cx="341.2" cy="545.200" r="1.500"/></g>
<g fill="#f3a425"><rect x="304" y="561.500" width="11" height="6.500" rx="2"/><rect x="320" y="561.500" width="11" height="6.500" rx="2"/><rect x="336" y="561.500" width="11" height="6.500" rx="2"/></g>
<g fill="#b5481a"><circle cx="309.6" cy="564.800" r="1.500"/><circle cx="325.5" cy="564.800" r="1.500"/><circle cx="341.5" cy="564.800" r="1.500"/></g>
<path d="M286 559.600H356" stroke="#33330f" stroke-width="3"/><circle cx="286.300" cy="559.600" r="2" fill="#b9c220"/><circle cx="355.600" cy="559.600" r="2" fill="#b9c220"/>
<path d="M355.500 543.500L365.800 537.500L530 552.500V601L475 593L362 581.500L355.500 572Z" fill="#757575"/>
<path d="M471.800 590L482.500 583.500L529 579V600.500L476 592.500Z" fill="url(#gGreyV)"/>
<path d="M356.600 547.700L366.400 541.400L529 556.600V578L482.500 582.500L471.800 588.700L362.900 578L356.600 569Z" fill="url(#gKiln)"/>
<path d="M478 565.500Q490 561.500 502 564.600Q514 567 523.600 573.600Q516 579 507.500 579Q500 582 493 580Q487 578 484.300 573.600Q482 569 478 565.500Z" fill="url(#gFlame)"/>
<rect x="400.400" y="537" width="7" height="6" rx="1" fill="#dcdcdc"/><rect x="400.400" y="584.300" width="7" height="8" rx="1" fill="#dcdcdc"/>
<rect x="479.800" y="546" width="7" height="5" rx="1" fill="#d6d6d6"/><rect x="479.800" y="584.500" width="7" height="14" rx="1" fill="#dcdcdc"/>
<path d="M425.500 538V545" stroke="#c0702a" stroke-width="1"/>
<rect x="529" y="546" width="21.400" height="72" fill="#5c5c5c"/><rect x="529" y="604.500" width="21.400" height="1.600" fill="#9a9a9a"/>
<rect x="523.600" y="571.800" width="39" height="5.700" fill="#c9c9c9" stroke="#888" stroke-width=".6"/>
</g>
<text x="438.7" y="535.5" font-size="17.5" textLength="109.3" lengthAdjust="spacingAndGlyphs" fill="#000">Prereduction</text>
<text x="255.5" y="627" font-size="17.5" textLength="92" lengthAdjust="spacingAndGlyphs" fill="#000">Preheating</text>
<text x="692.5" y="600" font-size="17.5" textLength="118.5" lengthAdjust="spacingAndGlyphs" fill="#000">Usable off gas</text>
<g>
<ellipse cx="892.500" cy="502.500" rx="8.800" ry="2.800" fill="#2e2e2e"/><path d="M884 503H901L895.500 512.500V517.500H889.500V512.500Z" fill="#5a5a5a"/>
<path d="M879 519H892V524.500H879Z" fill="#d0d0d0" stroke="#999" stroke-width=".5"/>
<path d="M885 518.500Q892.500 514.500 900 518.500Q907 523 906 532L903.500 548L907 563.500Q893 569 878 563.500L883 546L880.500 530Q880 522 885 518.500Z" fill="url(#gCoalMill)"/>
<ellipse cx="892.500" cy="564.500" rx="12" ry="3" fill="#4a4a4a"/>
<path d="M893.500 552Q892.500 545.500 899 544.500Q903.500 548 901.500 555Q897 557.500 893.500 552Z" fill="#f98a1c"/><path d="M895.500 551Q895.500 547.500 899 547Q900.500 550 899 553Z" fill="#fdd23a"/><path d="M899 556.500L904.500 558" stroke="#d4281c" stroke-width="1.500"/>
<path d="M904 547H912.500M904 553.500H912.500M905 559.500H911" stroke="#777" stroke-width="1.300"/>
</g>
<text x="868.7" y="593.7" font-size="17.5" textLength="55" lengthAdjust="spacingAndGlyphs" fill="#000">Milling</text>
<path d="M961.200 521.500V492.500" stroke="#fe0000" stroke-width="2.500" fill="none"/>
<path d="M961.2 492.5L910.9 498" stroke="#fe0000" stroke-width="2.5" fill="none"/><path d="M903.7 498.8L912.2 493.8L913.1 501.8z" fill="#fe0000"/>
<use href="#hopper" x="951.500" y="524.300" transform="translate(951.500 524.300) scale(.95) translate(-951.500 -524.300)"/>
<path d="M981 537.300H1017.500" stroke="#8a8a8a" stroke-width="1.600"/><path d="M981 535.500H1017.500" stroke="#fe0000" stroke-width="1.800"/><path d="M1003 530.500L1010.500 528V532.500Z" fill="#fe0000"/>
<path d="M1026 534Q1033.6 526.2 1043.5 520.8Q1044.5 520.5 1045.5 520.5L1056.5 520.5Q1057.5 520.5 1058.5 520.8Q1067.6 526.2 1074.5 534L1074.5 539L1026 539Z" fill="url(#gPileG)"/>
<path d="M1026 538.4H1074.5" stroke="#222" stroke-width="1.400"/>
<path d="M1043.5 521L1045.5 523.5L1056.5 523.5L1058.5 521M1045.5 523.5L1029 534M1056.5 523.5L1071.5 534" stroke="#000" stroke-opacity=".2" stroke-width=".8" fill="none"/>
<text x="1087" y="521" font-size="17.5" textLength="36.7" lengthAdjust="spacingAndGlyphs" fill="#000">Coal</text>
<text x="1157" y="559.5" font-size="17.5" textLength="45.5" lengthAdjust="spacingAndGlyphs" fill="#000">Lump</text>
<text x="1157" y="580.7" font-size="17.5" textLength="90" lengthAdjust="spacingAndGlyphs" fill="#000">reductants</text>
<path d="M1101 586.2Q1106.8 579.1 1114.7 574.3Q1115.7 574 1116.7 574L1132 574Q1133 574 1134 574.3Q1140.7 579.1 1145.5 586.2L1145.5 590.7L1101 590.7Z" fill="url(#gPileG)"/>
<path d="M1101 590.1H1145.5" stroke="#222" stroke-width="1.400"/>
<path d="M1114.7 574.5L1116.7 577L1132 577L1134 574.5M1116.7 577L1104 586.2M1132 577L1142.5 586.2" stroke="#000" stroke-opacity=".2" stroke-width=".8" fill="none"/>
<text x="1165" y="613.7" font-size="17.5" textLength="94.5" lengthAdjust="spacingAndGlyphs" fill="#000">Char, coke,</text>
<text x="1180.7" y="635" font-size="17.5" textLength="84.3" lengthAdjust="spacingAndGlyphs" fill="#000">anthracite</text>
<path d="M1101 624.3Q1107 617 1115 612Q1116 611.7 1117 611.7L1131 611.7Q1132 611.7 1133 612Q1141 617 1147 624.3L1147 629L1101 629Z" fill="url(#gPileT)"/>
<path d="M1101 628.4H1147" stroke="#0e6a66" stroke-width="1.400"/>
<path d="M1115 612.2L1117 614.7L1131 614.7L1133 612.2M1117 614.7L1104 624.3M1131 614.7L1144 624.3" stroke="#000" stroke-opacity=".2" stroke-width=".8" fill="none"/>
<text x="1107" y="647" font-size="12.5" textLength="26" lengthAdjust="spacingAndGlyphs" fill="#000">Flux</text>
<use href="#hopper" x="1109.500" y="657.500"/>
<use href="#loader" transform="translate(1219 642) scale(-.885 .97)"/>
<path d="M985.5 581.2L1077 581.2L1101.2 688L1135.5 688" stroke="#fe0000" stroke-width="2.5" fill="none" stroke-linejoin="round"/>
<circle cx="985.5" cy="581.2" r="3.1" fill="#fe0000"/>
<circle cx="1077" cy="581.2" r="3.1" fill="#fe0000"/>
<circle cx="1101.2" cy="688" r="3.1" fill="#fe0000"/>
<circle cx="1135.5" cy="688" r="3.1" fill="#fe0000"/>
<path d="M985.5 581.2L927.7 608.2" stroke="#fe0000" stroke-width="2.5" fill="none"/><path d="M921.2 611.2L927.7 603.8L931 611z" fill="#fe0000"/>
<path d="M985.5 581.2L966.9 605.5" stroke="#fe0000" stroke-width="2.5" fill="none"/><path d="M962.5 611.2L964.8 601.6L971.2 606.5z" fill="#fe0000"/>
<path d="M985.5 581.2L997.9 604.8" stroke="#fe0000" stroke-width="2.5" fill="none"/><path d="M1001.2 611.2L993.5 605.1L1000.6 601.4z" fill="#fe0000"/>
<path d="M985.5 581.2L1036.1 607.8" stroke="#fe0000" stroke-width="2.5" fill="none"/><path d="M1042.5 611.2L1032.7 610.5L1036.4 603.5z" fill="#fe0000"/>
<path d="M1102.5 595L1069.8 607" stroke="#fe0000" stroke-width="2.2" fill="none"/><path d="M1063 609.5L1070.1 602.6L1072.8 610.2z" fill="#fe0000"/>
<use href="#silo" x="902.5" y="611.700"/>
<use href="#silo" x="943.8" y="611.700"/>
<use href="#silo" x="985" y="611.700"/>
<use href="#silo" x="1026.7" y="611.700"/>
<text x="952" y="727.5" font-size="17.5" textLength="73.7" lengthAdjust="spacingAndGlyphs" fill="#000">Batching</text>
<path d="M531.500 618H548.500V629.500L541.500 649L546 657H538.500L534 648.500V629.500Z" fill="#6a6a6a"/>
<path d="M568.3 585.2L567.5 617.2L588.1 602.8L579 622.6L607.9 622.6L582 638.6L588.9 648.5L579 657.6L591.9 672.9L570.6 667.5L569.8 682L555.3 676.7L553 690.4L543.1 682L535.5 695.7L529.4 686.6L515 705.6L514.2 685.8L493.6 684.3L505.8 671.3L486.8 656.9L507.3 647.7L493.6 631L515.7 625.6L511.9 605.8L531 617.2L539.3 596.7L549.2 614.2Z" fill="#f7b4b4" fill-opacity=".5" stroke="#4d2222" stroke-width="1.100" stroke-linejoin="miter"/>
<path d="M535 627.600H546.500" stroke="#fff" stroke-width="1.300"/><path d="M536 629.500H546L542 640.500L546.500 657H541L538 645Z" fill="#a07274" fill-opacity=".7"/>
<path d="M628.500 575L578 641" stroke="#fe0000" stroke-width="2.200" fill="none"/>
<path d="M571.3 650L575 637.7L582.2 643.2z" fill="#fe0000"/>
<path d="M554.600 678H575.500V684L573.500 689L575 707H561.500L560 692L556 686Z" fill="url(#gPipeL)" stroke="#8a8a8a" stroke-width=".6"/>
<path d="M562 706H575L577 722Q578 731 583 738L572 742Q566 730 564.500 720Z" fill="#7c3434" fill-opacity=".85"/>
<path d="M544.400 660V677Q552 682 562 681V672L576 668V660Z" fill="url(#gCup)"/><rect x="569" y="664" width="7" height="16" fill="#e2e2e2"/>
<ellipse cx="560.200" cy="660" rx="15.700" ry="3.600" fill="#d9b7b7" stroke="#6c3c3e" stroke-width="1"/><ellipse cx="560.200" cy="660.300" rx="11" ry="2" fill="#a77678"/>
<path d="M427.5 742.5L510.2 678.1" stroke="#111" stroke-width="1.7" fill="none"/><path d="M516.5 673.2L511.1 682.5L506.2 676.2z" fill="#111"/>
<text x="323" y="782.5" font-size="22" textLength="36.8" lengthAdjust="spacingAndGlyphs" fill="#000">Hot</text>
<text x="323" y="809.5" font-size="22" textLength="81.5" lengthAdjust="spacingAndGlyphs" fill="#000">loading</text>
<text x="323" y="836.2" font-size="22" textLength="79" lengthAdjust="spacingAndGlyphs" fill="#000">system</text>
<g>
<path d="M544.500 757Q548 726 572.500 713.700H670Q694 726 699.500 757V811H544.500Z" fill="#696969"/>
<path d="M544.500 756H699.500V810.800H544.500Z" fill="#383838"/>
<path d="M553.700 760L575.500 733.500H664.500L691 762V796H553.700Z" fill="url(#gFurn)"/>
<path d="M553.700 777H691V792Q691 796.500 686 796.500H559Q553.700 796.500 553.700 792Z" fill="url(#gBath)"/>
<path d="M553.700 770H616L618.500 765.500H627L629.500 770H659L661.500 765.500H670L672.500 770H691V777.500H553.700Z" fill="#a3161a"/>
<path d="M549.500 759.500L575 732.300H665L692.500 761.500" stroke="#e4e4e4" stroke-width="2.200" fill="none"/>
<path d="M544.500 756L553.700 760V796.500H691V762L699.500 756V810.800H544.500Z" fill="#383838"/>
<path d="M564.500 720Q566 735 568.500 748L569 770H578.500L577.500 748Q576.500 735 577 722Z" fill="#7c2a2c" fill-opacity=".9"/><path d="M563 772Q573 764 583 772Z" fill="#8e1c1e"/>
<rect x="593.2" y="678.800" width="10.600" height="106.500" fill="url(#gElec)"/>
<path d="M588 707.500Q598.5 703 609 707.500V715.500Q598.5 720 588 715.500Z" fill="#c9c9c9" stroke="#8a8a8a" stroke-width=".7"/><path d="M588 711.500Q598.5 716 609 711.500" stroke="#8e8e8e" stroke-width=".8" fill="none"/>
<rect x="593.2" y="678.800" width="10.600" height="30" fill="url(#gElec)"/>
<rect x="637" y="678.800" width="10.600" height="106.500" fill="url(#gElec)"/>
<path d="M631.8 707.500Q642.3 703 652.8 707.500V715.500Q642.3 720 631.8 715.500Z" fill="#c9c9c9" stroke="#8a8a8a" stroke-width=".7"/><path d="M631.8 711.500Q642.3 716 652.8 711.500" stroke="#8e8e8e" stroke-width=".8" fill="none"/>
<rect x="637" y="678.800" width="10.600" height="30" fill="url(#gElec)"/>
</g>
<text x="581" y="835.7" font-size="17.5" textLength="72" lengthAdjust="spacingAndGlyphs" fill="#000">Smelting</text>
<path d="M673.700 736L686 716" stroke="#8a8a8a" stroke-width="4"/><path d="M673.700 736L686 716" stroke="#c43a2a" stroke-width="1.200"/>
<path d="M670 741.500L715.500 665H733.400V686.500" stroke="#8f8a1a" stroke-width="4.200" fill="none"/><path d="M670 741.500L715.500 665.300H733.400V686.500" stroke="#e6e41a" stroke-width="2.800" fill="none"/>
<g>
<rect x="726.200" y="691" width="14.100" height="14.500" rx="1.500" fill="url(#gPipeL)"/><path d="M728.800 705.300H738.800V742L733.500 754L728.800 742Z" fill="url(#gGreyH)"/>
<rect x="730.800" y="685.800" width="5.200" height="3" fill="#222"/><rect x="731.300" y="688" width="4.200" height="3" fill="#b0141a"/>
<path d="M738.800 716.300H766V721H756.600L738.800 734Z" fill="#686868"/><rect x="738.800" y="716.300" width="27.200" height="4.700" rx="1.500" fill="#757575"/>
<rect x="803.700" y="697" width="3.600" height="21" fill="#3e3e3e"/><path d="M782.800 731.500L791 726.500H804.800L812 731.500Z" fill="#161616"/><circle cx="796.900" cy="717.900" r="9.800" fill="#606060"/><circle cx="796.500" cy="718" r="6.500" fill="#7c7c7c"/><circle cx="796.500" cy="718.500" r="2.600" fill="#555"/>
<rect x="778" y="716.800" width="19.400" height="3.700" rx="1.500" fill="#6c6c6c"/>
</g>
<text x="758" y="757.6" font-size="17.5" textLength="124" lengthAdjust="spacingAndGlyphs" fill="#000">Gas Scrubbing</text>
<path d="M699 789H703.500Q706 789 706 792V797.500Q706 800 709 800H718" stroke="#7a4a10" stroke-width="4" fill="none"/><path d="M699 789H703.500Q706 789 706 792V797.500Q706 800 709 800H718" stroke="#f0a821" stroke-width="2.200" fill="none"/>
<rect x="718" y="793.700" width="13.300" height="12.600" fill="#f3ba1c" stroke="#7a5a10" stroke-width=".8"/><rect x="718.500" y="806.300" width="12.500" height="7.200" fill="#6a2e30"/>
<path d="M731.500 800H741.500Q744 800 744 803V821" stroke="#7a2a10" stroke-width="3.800" fill="none"/><path d="M731.500 800H741.500Q744 800 744 803V821" stroke="#ea6a20" stroke-width="2" fill="none"/>
<path d="M732.4 824L754.4 824L748.9 845.5Q743.4 847.5 737.9 845.5Z" fill="url(#gGreyH)"/>
<ellipse cx="743.4" cy="824.5" rx="11" ry="4" fill="#ee5a14" stroke="#6a6a6a" stroke-width="1"/><ellipse cx="743.4" cy="825" rx="8" ry="2.300" fill="#fdc92f"/>
<path d="M753.5 831L789.7 793.5" stroke="#111" stroke-width="1.7" fill="none"/><path d="M795.2 787.7L791.1 797.7L785.4 792.1z" fill="#111"/>
<path d="M753.5 831L772.2 848.9" stroke="#111" stroke-width="1.7" fill="none"/><path d="M778 854.4L768 850.4L773.5 844.6z" fill="#111"/>
<path d="M711.2 817.5L668.4 863.6" stroke="#111" stroke-width="1.7" fill="none"/><path d="M663 869.5L666.9 859.4L672.7 864.9z" fill="#111"/>
<g>
<path d="M814.900 790H872.400V799L828.600 814.800H814.900Z" fill="#b7c9c7" stroke="#484848" stroke-width="2.400" stroke-linejoin="miter"/>
<path d="M803.800 792.300H822.500" stroke="#6d6a12" stroke-width="2.400"/>
<path d="M804.700 771.500L829 770.600L831.200 774L823.100 789.500L818.700 788.800L804.700 779.200Z" fill="#6c6c6c"/>
<path d="M828.600 771.800Q832.500 774 831 779Q829 785 829.600 790L831 798Q826.500 792 825.300 786Q823.800 778 828.600 771.800Z" fill="#e8421a"/><path d="M828.800 774.500Q830.500 777 829.300 781Q828 785 828.300 789Q826.300 783.500 827 779.500Q827.500 776.500 828.800 774.500Z" fill="#fdc62a"/>
<path d="M821.700 807.200L879.200 782.100" stroke="#4e4a10" stroke-width="4"/><path d="M821.700 807.200L879.200 782.100" stroke="#d2c82e" stroke-width="1.600" stroke-dasharray="4 1.500"/>
<path d="M879.200 782.500L882.200 791.700L886.600 798.400" stroke="#5a5a5a" stroke-width="2.800" fill="none"/>
<rect x="883.600" y="798.700" width="39.900" height="5.600" rx="2.800" fill="#10e326" stroke="#0b7a18" stroke-width="1"/>
</g>
<text x="856.8" y="829.6" font-size="17.5" textLength="98.4" lengthAdjust="spacingAndGlyphs" fill="#000">Granulation</text>
<path d="M612 891.200Q622 888.500 628 882.500Q634 876.500 640 877.500Q647 880 652 886Q656 889.500 659.500 891.200Z" fill="url(#gSlag)"/><path d="M612 891.200H659.500" stroke="#6f857a" stroke-width="1"/>
<text x="612.5" y="933.7" font-size="17.5" textLength="35" lengthAdjust="spacingAndGlyphs" fill="#000">Slag</text>
<g>
<path d="M787.400 893.600L836.400 857.400L871.800 860.400V865.500L822.400 907.600L788.400 899.500Z" fill="#4e4e4e"/><path d="M787.400 893.600L836.400 857.400L871.800 860.400L822.600 902Z" fill="#6a6a6a"/>
<path d="M839 861Q851 858.500 863.500 862.500Q858 870 850.500 873Q839 874 829.500 871Q833 865 839 861Z" fill="#b2561c"/><path d="M825 873.500Q837 871.500 848.500 875.500Q843 883 836 886Q824 887 814.500 883.500Q818.500 877.500 825 873.500Z" fill="#c7601e"/><path d="M808.500 886.500Q820 884.500 832 889Q826.500 896 819.500 899Q807 899.500 798 896Q802 890.500 808.500 886.500Z" fill="url(#gMould)"/>
<path d="M779.100 855.900L803.200 854.400L805.400 857.400L798.800 872.200L794.400 871.400L779.100 861.800Z" fill="#6c6c6c"/>
<path d="M802.800 855.500Q806.800 858 805.200 863Q803.200 869 804 875L806 886Q801 878.500 799.800 871.500Q798.500 862 802.800 855.500Z" fill="#e8421a"/><path d="M803 858.500Q804.800 861 803.600 865Q802.400 869.500 802.800 874Q800.800 868 801.400 863.500Q801.800 860.500 803 858.500Z" fill="#fdc62a"/>
</g>
<text x="780.6" y="930" font-size="17.5" textLength="53.7" lengthAdjust="spacingAndGlyphs" fill="#000">Lumpy</text>
<path d="M861.3 892.9L917.5 880.3" stroke="#fe0000" stroke-width="2.4" fill="none"/><path d="M927.6 878L915.9 885.2L913.9 876.5z" fill="#fe0000"/>
<use href="#loader" transform="translate(902.500 831.500) scale(.985 .98)"/>
<use href="#thopper" x="985.200" y="855.500"/>
<text x="963.3" y="934" font-size="17.5" textLength="77.2" lengthAdjust="spacingAndGlyphs" fill="#000">Crushing</text>
<path d="M985.8 900.4L1027 900.4L1052.5 801L1069 801" stroke="#fe0000" stroke-width="2.5" fill="none" stroke-linejoin="round"/>
<circle cx="985.8" cy="900.4" r="3.1" fill="#fe0000"/>
<circle cx="1027" cy="900.4" r="3.1" fill="#fe0000"/>
<circle cx="1052.5" cy="801" r="3.1" fill="#fe0000"/>
<circle cx="1069" cy="801" r="3.1" fill="#fe0000"/>
<path d="M1069 801L1069 816.3" stroke="#fe0000" stroke-width="2.5" fill="none"/><path d="M1069 823.5L1065 814.5L1073 814.5z" fill="#fe0000"/>
<use href="#thopper" transform="translate(1061 832) scale(.78 .85)"/>
<path d="M1068 867.200L1096.300 875.200L1092.500 881L1068 880Z" fill="#c7762a" stroke="#3a2a1a" stroke-width="1.200" stroke-linejoin="round"/>
<path d="M1095 879Q1091 888 1096 897Q1100 904 1102.500 904Q1104.500 896 1101 887Q1098.500 881 1095 879Z" fill="#9c9c9c" stroke="#555" stroke-width=".8"/><path d="M1114 882Q1117 890 1112 898Q1108 903.500 1105.500 904Q1104 897 1107.500 889Q1110.500 883 1114 882Z" fill="#9c9c9c" stroke="#555" stroke-width=".8"/><path d="M1102 903L1104.300 909.500L1106.500 903M1099 886L1102 884" stroke="#333" stroke-width="1.100" fill="none"/>
<path d="M1093.2 915.8L1118.6 915.8L1143.3 831L1160.5 831" stroke="#fe0000" stroke-width="2.5" fill="none" stroke-linejoin="round"/>
<circle cx="1093.2" cy="915.8" r="3.1" fill="#fe0000"/>
<circle cx="1118.6" cy="915.8" r="3.1" fill="#fe0000"/>
<circle cx="1143.3" cy="831" r="3.1" fill="#fe0000"/>
<circle cx="1160.5" cy="831" r="3.1" fill="#fe0000"/>
<path d="M1160.5 831L1160.5 846.8" stroke="#fe0000" stroke-width="2.5" fill="none"/><path d="M1160.5 854L1156.5 845L1164.5 845z" fill="#fe0000"/>
<use href="#thopper" transform="translate(1144 862.500) scale(.95 1.010)"/>
<path d="M1152.300 904.800L1191.500 911.800V915.600H1152.300Z" fill="#b87a3a" stroke="#3a2a1a" stroke-width="1.200" stroke-linejoin="round"/>
<text x="1133.8" y="943.8" font-size="17.5" textLength="85.7" lengthAdjust="spacingAndGlyphs" fill="#000">Screening</text>
</svg>
<div class="t cap" style="left:408.500px;top:218px"><b>Fig. 1.</b></div>
<div class="t cap2" style="left:455.700px;top:219.200px;word-spacing:1px">Ferrochrome production using SBS-SAF process technology <span class="lnk">(Basson and Daavittila, 2013)</span>.</div>
<div class="t cap" style="left:460.500px;top:973.500px"><b>Fig. 2.</b></div>
<div class="t cap2" style="left:509.500px;top:974.700px;word-spacing:1.600px">Ferrochrome production using RK-SAF process technology <span class="lnk">(Naiker, 2007)</span>.</div>
<style>.cap{font-family:"Liberation Serif",serif;font-size:16px;letter-spacing:-.15px;color:#111}.cap2{font-family:"DejaVu Serif Condensed","DejaVu Serif","Liberation Serif",serif;font-size:14px;letter-spacing:.1px;color:#111}.lnk{color:#2578ad}</style>
<!--DIAGRAM-END-->
<!--TASKBAR-->
<!-- hscroll strip details -->
<div class="abs" style="left:63px;top:994px;width:113px;height:15px;background:#e0e0e0"></div>
<div class="abs" style="left:204px;top:994px;width:1193px;height:15px;background:#cdcdcd"></div>
<div class="t" style="left:83px;top:995.500px;font-size:12px;color:#111;letter-spacing:-.32px">8.27 x 11.02 in</div>
<svg class="abs" style="left:176px;top:994px" width="1240" height="15" viewBox="0 0 1240 15"><path d="M11 4l-4 3.500 4 3.500M1226 4l4 3.500-4 3.500" fill="none" stroke="#333" stroke-width="1.600"/></svg>
<div class="abs" style="left:0;top:1009px;width:1680px;height:1px;background:#f7f7f7"></div>
<!-- vscroll details -->
<div class="abs" style="left:1415px;top:367px;width:15px;height:37px;background:#c1c1c1"></div>
<svg class="abs" style="left:1415px;top:127px" width="16" height="866" viewBox="0 0 16 866"><path d="M3.500 12l4-4 4 4M3.500 854l4 4 4-4" fill="none" stroke="#404040" stroke-width="1.600"/></svg>
<!-- ===== taskbar ===== -->
<div class="abs" style="left:48px;top:1010px;width:344px;height:40px;background:#f2f2f2"></div>
<div class="abs" style="left:883px;top:1010px;width:48px;height:40px;background:#3d4043"></div>
<svg class="abs" style="left:0;top:1010px" width="1680" height="40" viewBox="0 1010 1680 40">
<!-- windows logo -->
<path d="M16 1024.300l6.500-.9v6.300h-6.500zM23.500 1023.200l8.500-1.200v7.700h-8.500zM16 1030.700h6.500v6.300l-6.500-.9zM23.500 1030.700h8.500v7.700l-8.500-1.200z" fill="#fff"/>
<!-- search glass -->
<circle cx="70.500" cy="1026.500" r="6" fill="none" stroke="#222" stroke-width="1.500"/><path d="M66 1031l-6 6.500" stroke="#222" stroke-width="1.500"/>
<!-- cortana, task view -->
<circle cx="415.700" cy="1030" r="7" fill="none" stroke="#fff" stroke-width="2.200"/>
<g fill="none" stroke="#fff" stroke-width="1.400"><rect x="457" y="1025.500" width="9" height="9"/><path d="M455.500 1022.500h12M455.500 1037.500h12M469.500 1024v2.500M469.500 1029v5M469.500 1036v1.500"/></g>
<!-- explorer -->
<path d="M504 1021h8l2 2.500h11.500v14.500h-21.500z" fill="#f5b93a"/><path d="M504 1026h21.500v12h-21.500z" fill="#fbd45f"/><path d="M509 1033h11.500v5h-3v-2.500h-5.500v2.500h-3z" fill="#3f8fe0"/>
<!-- chrome -->
<circle cx="564" cy="1030" r="11" fill="#e33b2e"/><path d="M564 1030l-9.500-5.500a11 11 0 0 0 4 15z" fill="#2da94f"/><path d="M564 1030l-5.500 9.500a11 11 0 0 0 16.500-9.500z" fill="#fdd835"/><path d="M564 1030h11a11 11 0 0 0-1.500-5.500h-9.500z" fill="#e33b2e"/><path d="M558.500 1039.500l5.500-9.500h11a11 11 0 0 1-16.500 9.500z" fill="#fcc934"/><path d="M554.500 1024.500l5 8.500 -1 6.500a11 11 0 0 1-4-15z" fill="#2da94f"/><circle cx="564" cy="1030" r="5" fill="#fff"/><circle cx="564" cy="1030" r="3.900" fill="#4285f4"/>
<!-- outlook -->
<rect x="608" y="1020" width="16" height="14" fill="#1a8ad6"/><path d="M606 1029l9 6 9-6v11h-18z" fill="#35a5ea"/><path d="M615 1035l9-6v11z" fill="#1572bd"/><rect x="601" y="1023" width="12.500" height="12.500" rx="1.500" fill="#0f64b4"/><circle cx="607.200" cy="1029.200" r="3" fill="none" stroke="#fff" stroke-width="1.700"/>
<!-- teams -->
<circle cx="671" cy="1023.500" r="3" fill="#5b5fc7"/><circle cx="663.500" cy="1022" r="3.800" fill="#7b83eb"/><path d="M656 1027h13v9.500a6 6 0 0 1-13 0z" fill="#6a70d6"/><path d="M667 1028h8v7a4 4 0 0 1-8 0z" fill="#4b4fb8"/><rect x="650.500" y="1024.500" width="12.500" height="12.500" rx="1.500" fill="#4b53bc"/><path d="M653.500 1027.800h6.500M656.800 1027.800v7" stroke="#fff" stroke-width="1.700" fill="none"/><circle cx="670" cy="1038" r="4.300" fill="#84c225" stroke="#fff" stroke-width=".8"/><path d="M668 1038l1.500 1.500 2.500-3" stroke="#fff" stroke-width="1" fill="none"/>
<!-- word -->
<rect x="706" y="1019.500" width="16.500" height="21" rx="1.500" fill="#2b7cd3"/><rect x="706" y="1019.500" width="16.500" height="5.300" fill="#41a5ee"/><rect x="706" y="1030" width="16.500" height="5.300" fill="#185abd"/><rect x="706" y="1035.300" width="16.500" height="5.200" rx="1" fill="#103f91"/><rect x="699" y="1023.700" width="12.500" height="12.500" rx="1.500" fill="#185abd"/><path d="M701.500 1026.800l1.700 6.400 2-6.400 2 6.400 1.700-6.400" stroke="#fff" stroke-width="1.400" fill="none"/>
<!-- powerpoint -->
<circle cx="763.500" cy="1030" r="10.500" fill="#d35230"/><path d="M763.500 1019.500a10.500 10.500 0 0 1 10.500 10.500h-10.500z" fill="#ff8f6b"/><path d="M753 1030h21a10.500 10.500 0 0 1-21 0z" fill="#c43e1c" opacity=".75"/><rect x="748" y="1023.700" width="12.500" height="12.500" rx="1.500" fill="#c43e1c"/><path d="M752.300 1033.500v-7h2.700a2.200 2.200 0 0 1 0 4.400h-2.700" stroke="#fff" stroke-width="1.500" fill="none"/>
<!-- onenote -->
<rect x="804" y="1019.500" width="16.500" height="21" rx="1.500" fill="#9332bf"/><rect x="815" y="1019.500" width="5.500" height="5.300" fill="#ca64ea"/><rect x="815" y="1024.800" width="5.500" height="5.300" fill="#ae4bd5"/><rect x="815" y="1035.300" width="5.500" height="5.200" fill="#7719aa"/><rect x="797" y="1023.700" width="12.500" height="12.500" rx="1.500" fill="#7719aa"/><path d="M800.800 1033.500v-7l5 7v-7" stroke="#fff" stroke-width="1.500" fill="none"/>
<!-- excel -->
<rect x="853" y="1019.500" width="16.500" height="21" rx="1.500" fill="#21a366"/><rect x="861" y="1019.500" width="8.500" height="5.300" fill="#33c481"/><rect x="853" y="1024.800" width="8.500" height="5.300" fill="#107c41"/><rect x="853" y="1035.300" width="16.500" height="5.200" rx="1" fill="#185c37"/><rect x="846" y="1023.700" width="12.500" height="12.500" rx="1.500" fill="#107c41"/><path d="M849.500 1026.800l5.500 6.600M855 1026.800l-5.500 6.600" stroke="#fff" stroke-width="1.500" fill="none"/>
<!-- acrobat -->
<rect x="896.500" y="1019" width="22" height="22" rx="3.500" fill="#b30b00"/><path d="M906.300 1023.500c-1.200 0-1 2.400.2 4.800 1.400 2.700 4.200 5.500 5.900 5.100 1.400-.3.400-1.800-1.500-1.700-2.900.2-6.500 1.500-8.100 3.100-1.200 1.200-.1 2.200 1 1.100 1.500-1.700 2.900-5.400 3.400-8.200.4-2.200 0-4.200-.9-4.200z" fill="none" stroke="#fff" stroke-width="1.400"/>
<!-- running indicators -->
<g fill="#76b9ed"><rect x="495" y="1048" width="40" height="2"/><rect x="544" y="1048" width="40" height="2"/><rect x="593" y="1048" width="40" height="2"/><rect x="642" y="1048" width="40" height="2"/><rect x="691" y="1048" width="40" height="2"/><rect x="740" y="1048" width="40" height="2"/><rect x="789" y="1048" width="40" height="2"/><rect x="838" y="1048" width="40" height="2"/><rect x="883" y="1048" width="48" height="2"/></g>
<rect x="774" y="1048" width="6" height="2" fill="#4d7fa8"/><rect x="872" y="1048" width="6" height="2" fill="#4d7fa8"/>
<!-- weather moon -->
<circle cx="1302.500" cy="1030" r="9" fill="#ffc629"/><circle cx="1298" cy="1027" r="7.600" fill="#1b1b1b"/><path d="M1292 1027.500a2.400 2.400 0 0 1 2-3.600 3 3 0 0 1 5.500.3 2 2 0 0 1 .3 3.800h-6.500z" fill="#cfe3f5"/>
<!-- tray -->
<path d="M1443 1033.500l6-6 6 6" fill="none" stroke="#fff" stroke-width="1.500"/>
<path d="M1468.500 1035.500a3.300 3.300 0 0 1-.5-6.500 4.500 4.500 0 0 1 8.300-1.300 3.500 3.500 0 0 1 5.200 3 2.500 2.500 0 0 1-.8 4.800z" fill="#0f7fd8"/>
<path d="M1492.500 1035.500a3.300 3.300 0 0 1-.5-6.500 4.500 4.500 0 0 1 8.300-1.300 3.500 3.500 0 0 1 5.200 3 2.500 2.500 0 0 1-.8 4.800z" fill="#c8c8c8"/><circle cx="1501" cy="1034" r="4.300" fill="#e81123"/><path d="M1499.200 1032.200l3.600 3.600M1502.800 1032.200l-3.600 3.600" stroke="#fff" stroke-width="1.100"/>
<g fill="none" stroke="#fff" stroke-width="1.200"><rect x="1516.500" y="1024.500" width="12" height="9"/><path d="M1522.500 1033.500v3M1519 1037h7"/><rect x="1513.500" y="1024.500" width="3" height="5" fill="#1b1b1b"/><path d="M1513.500 1029.500v6.500h3"/></g>
<g fill="none" stroke="#fff" stroke-width="1.200"><path d="M1538 1027.500h3l4-3.500v12l-4-3.500h-3z"/><path d="M1547.500 1027.500a3.500 3.500 0 0 1 0 5"/><path d="M1549.800 1025.500a6.500 6.500 0 0 1 0 9" stroke="#9a9a9a"/><path d="M1552 1023.500a9.500 9.500 0 0 1 0 13" stroke="#6a6a6a"/></g>
<!-- notification -->
<path d="M1640 1022h15v11.500h-8.500l-3.500 3.500v-3.500h-3z" fill="#fff"/><path d="M1642.500 1025.500h10M1642.500 1028h10M1642.500 1030.500h10" stroke="#1b1b1b" stroke-width=".9"/><circle cx="1654.300" cy="1036.700" r="8" fill="#1b1b1b" stroke="#7a7a7a" stroke-width="1"/>
</svg>
<div class="t" style="left:88px;top:1023px;font-size:15px;color:#1c1c1c;letter-spacing:-.24px">Type here to search</div>
<div class="t" style="left:1321px;top:1024.500px;font-size:13.500px;color:#fff;letter-spacing:-.42px">7°C</div>
<div class="t" style="left:1351.500px;top:1024.500px;font-size:13.500px;color:#fff;letter-spacing:.16px">Mostly clear</div>
<div class="t" style="left:1561px;top:1014.500px;width:60px;text-align:center;font-size:12px;color:#fff;letter-spacing:-.5px">23:58</div>
<div class="t" style="left:1561px;top:1032.500px;width:60px;text-align:center;font-size:12px;color:#fff;letter-spacing:-.36px">04/10/2021</div>
<div class="t" style="left:1650.500px;top:1031px;font-size:11.500px;color:#fff">9</div>
<!--TASKBAR-END-->
</body>
</html>
